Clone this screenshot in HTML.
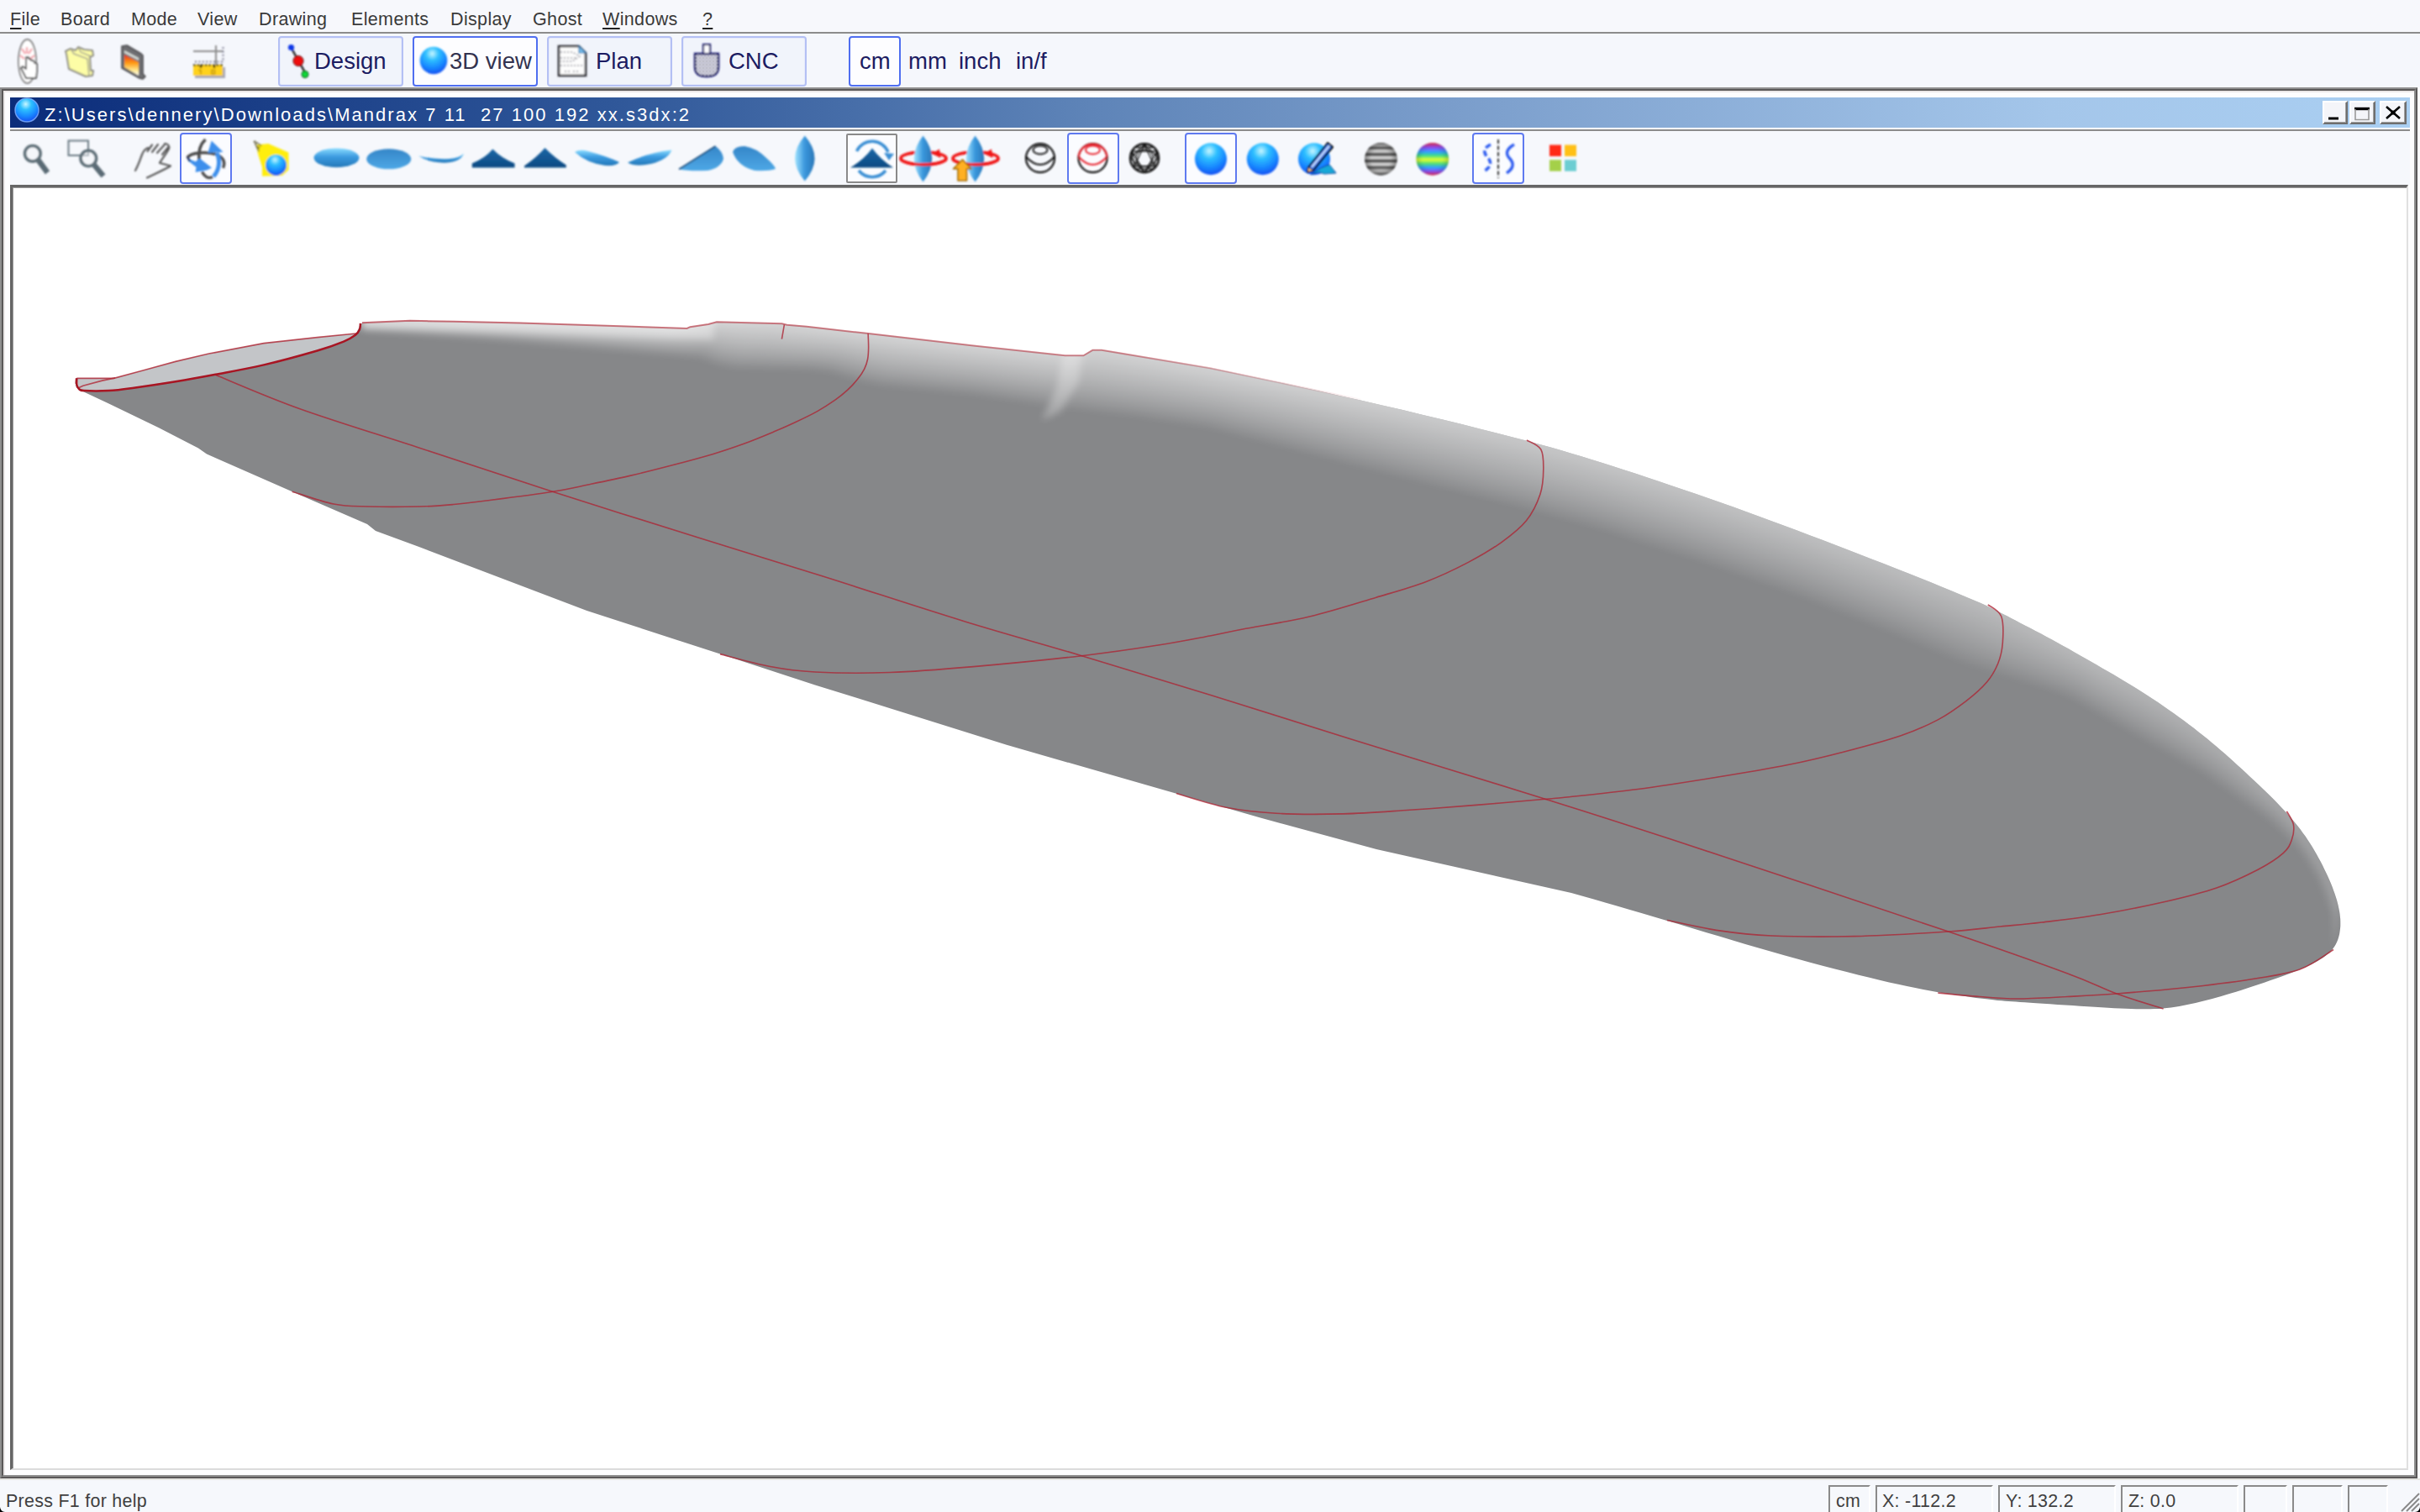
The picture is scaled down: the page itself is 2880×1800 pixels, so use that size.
<!DOCTYPE html><html><head><meta charset="utf-8"><title>Shape3d</title><style>
*{box-sizing:border-box;margin:0;padding:0}
html,body{width:2880px;height:1800px;overflow:hidden;background:#f6f8fc;font-family:"Liberation Sans",sans-serif;}
.abs{position:absolute}
#menubar{position:absolute;left:0;top:0;width:2880px;height:38px;background:#f7f8fc}
#menubar span{position:absolute;top:9.5px;font-size:21.5px;line-height:26px;color:#3a3a3a;letter-spacing:.35px;white-space:nowrap}
#menubar u{text-decoration:underline;text-decoration-thickness:2px;text-underline-offset:2.5px;text-decoration-color:#222}
#menuline{position:absolute;left:0;top:38px;width:2880px;height:2px;background:#8c8c8c}
#tb1{position:absolute;left:0;top:40px;width:2880px;height:64px;background:#f5f7fc}
.btn{position:absolute;top:43px;height:60px;border:2px solid #b4c0f4;border-radius:4px;background:#f1f4fb;box-shadow:inset 0 0 0 1px #e6eafb}
.btn.sel{border-color:#4f6ef0;background:#fdfdff;box-shadow:none;border-width:2.4px}
.btxt{position:absolute;font-size:27.5px;line-height:32px;color:#1c1c62;white-space:nowrap;top:57px}
#frame{position:absolute;left:0;top:104px;width:2880px;height:1658px;background:#fdfdfe;border-bottom:2px solid #e4e4e0}
#f1{position:absolute;left:0;top:0;width:2877px;height:1656px;border:2px solid #8f8f8f;border-right-color:#5a5858;border-bottom-color:#5a5858}
#f2{position:absolute;left:2px;top:2px;width:2873px;height:1652px;border:2px solid #5a5858;border-right-color:#8f8f8f;border-bottom-color:#8f8f8f}
#f3{position:absolute;left:4px;top:4px;width:2869px;height:1648px;border:2px solid #ebe8e8;border-right:0;border-bottom:0}
#title{position:absolute;left:12px;top:12px;width:2856px;height:36px;background:linear-gradient(90deg,#0b2c7a 0%,#2f5799 25%,#5e84b8 45%,#7a9dcb 60%,#a4c6ea 85%,#aacff2 100%)}
#ttext{position:absolute;left:41px;top:7.5px;font-size:22px;line-height:26px;color:#fff;letter-spacing:2.05px;white-space:pre}
#tline{position:absolute;left:12px;top:50px;width:2856px;height:2px;background:#8c8c8c}
.wb{position:absolute;top:16px;height:28px;background:#f4f5f9;border:2px solid #fff;border-right-color:#6e6e6e;border-bottom-color:#6e6e6e;box-shadow:inset -1px -1px 0 #a0a0a0}
#tb2{position:absolute;left:12px;top:52px;width:2856px;height:64px;background:#f6f8fc}
.tbox{position:absolute;top:158px;height:61px;border:2.4px solid #5f7af0;border-radius:4px;background:#fbfcff}
.tbox.g{border-color:#8a8a8a;border-radius:2px;top:159px;height:59px;border-width:2px}
#view{position:absolute;left:12px;top:116px;width:2854px;height:1530px;background:#fff;border:3px solid #666;border-right:2px solid #e0e0e0;border-bottom:2px solid #dcdcdc}
#view:after{content:"";position:absolute;left:0;top:0;right:0;bottom:0;border-left:1px solid #9a9a9a;border-top:1px solid #9a9a9a}
#status{position:absolute;left:0;top:1762px;width:2880px;height:38px;background:#f6f8fc}
#status span{position:absolute;top:11.8px;font-size:21.4px;line-height:26px;color:#404040;letter-spacing:.3px;white-space:nowrap}
.pane{position:absolute;top:1768px;height:34px;border-left:2px solid #8a8a8a;border-top:2px solid #8a8a8a;border-right:2px solid #fff}
svg.board{position:absolute;left:0;top:0}
svg.ic{position:absolute;overflow:visible}
</style></head><body>
<div id="menubar">
<span style="left:12px"><u>F</u>ile</span>
<span style="left:72px">Board</span>
<span style="left:156px">Mode</span>
<span style="left:235px">View</span>
<span style="left:308px">Drawing</span>
<span style="left:418px">Elements</span>
<span style="left:536px">Display</span>
<span style="left:634px">Ghost</span>
<span style="left:717px"><u>W</u>indows</span>
<span style="left:836px"><u>?</u></span>
</div><div id="menuline"></div>
<div id="tb1"></div>
<div class="btn" style="left:331px;width:149px"></div>
<div class="btn sel" style="left:491px;width:149px"></div>
<div class="btn" style="left:651px;width:149px"></div>
<div class="btn" style="left:811px;width:149px"></div>
<div class="btn sel" style="left:1010px;width:62px"></div>
<div class="btxt" style="left:374px;color:#1c1c62">Design</div>
<div class="btxt" style="left:535px;color:#33334f">3D view</div>
<div class="btxt" style="left:709px;color:#1c1c62">Plan</div>
<div class="btxt" style="left:867px;color:#1c1c62">CNC</div>
<div class="btxt" style="left:1023px;color:#1c1c62">cm</div>
<div class="btxt" style="left:1081px;color:#1c1c62">mm</div>
<div class="btxt" style="left:1141px;color:#1c1c62">inch</div>
<div class="btxt" style="left:1209px;color:#1c1c62">in/f</div>
<svg class="ic" style="left:0;top:0" width="2880" height="230" viewBox="0 0 2880 230">
<defs>
<radialGradient id="sph" cx=".45" cy=".25" r=".8"><stop offset="0" stop-color="#c8f6ff"/><stop offset=".3" stop-color="#2ec0ff"/><stop offset=".65" stop-color="#1888ff"/><stop offset="1" stop-color="#1746f0"/></radialGradient>
<linearGradient id="lz" x1="0" y1="0" x2="0" y2="1"><stop offset="0" stop-color="#8adcff"/><stop offset=".45" stop-color="#3c9be0"/><stop offset="1" stop-color="#2478b8"/></linearGradient>
<linearGradient id="lz2" x1="0" y1="0" x2="0" y2="1"><stop offset="0" stop-color="#3586c8"/><stop offset="1" stop-color="#4ea8e6"/></linearGradient>
<linearGradient id="lzh" x1="0" y1="0" x2="1" y2="0"><stop offset="0" stop-color="#9fe3ff"/><stop offset=".5" stop-color="#3996dc"/><stop offset="1" stop-color="#2c78b8"/></linearGradient>
<linearGradient id="tri" x1="0" y1="0" x2="0" y2="1"><stop offset="0" stop-color="#1d66a6"/><stop offset="1" stop-color="#0a4a82"/></linearGradient>
<linearGradient id="flame" x1="0" y1="0" x2="0" y2="1"><stop offset="0" stop-color="#e83020"/><stop offset=".4" stop-color="#ff9a10"/><stop offset=".75" stop-color="#ffe890"/><stop offset="1" stop-color="#fff"/></linearGradient>
<linearGradient id="rain" x1="0" y1="0" x2="0" y2="1"><stop offset="0" stop-color="#ff3050"/><stop offset=".15" stop-color="#9050ff"/><stop offset=".28" stop-color="#30a0ff"/><stop offset=".4" stop-color="#40e080"/><stop offset=".52" stop-color="#e8ff30"/><stop offset=".64" stop-color="#50e070"/><stop offset=".76" stop-color="#30a0ff"/><stop offset=".88" stop-color="#9050ff"/><stop offset="1" stop-color="#ff3050"/></linearGradient>
<linearGradient id="strp" x1="0" y1="0" x2="0" y2="1">
<stop offset="0" stop-color="#555"/><stop offset=".08" stop-color="#ddd"/><stop offset=".16" stop-color="#444"/><stop offset=".26" stop-color="#e8e8e8"/><stop offset=".36" stop-color="#333"/><stop offset=".46" stop-color="#eee"/><stop offset=".56" stop-color="#333"/><stop offset=".66" stop-color="#e8e8e8"/><stop offset=".76" stop-color="#444"/><stop offset=".86" stop-color="#ddd"/><stop offset="1" stop-color="#555"/></linearGradient>
<radialGradient id="shade" cx=".5" cy=".5" r=".5"><stop offset=".6" stop-color="#000" stop-opacity="0"/><stop offset="1" stop-color="#000" stop-opacity=".35"/></radialGradient>
<filter id="ib"><feGaussianBlur stdDeviation="0.8"/></filter>
</defs>
<g filter="url(#ib)">
<ellipse cx="32.5" cy="73" rx="10.5" ry="26" fill="#fff" stroke="#7a7a7a" stroke-width="1.8"/>
<path d="M26,58 l4,6 M38,58 l-4,6 M24,66 l5,4 M41,66 l-5,4 M32,56 v8" stroke="#f4a8b0" stroke-width="2.4" fill="none"/>
<path d="M31,68 l0,14 l-4,-3 l-2,2 l6,12 l12,0 l1,-8 l0,-9 l-3,-1 l-1,-3 l-3,0 l-1,-2 l-2,0 l0,-2 z" fill="#fff" stroke="#444" stroke-width="1.8" stroke-linejoin="round"/>
<path d="M78,61 L84,58 L90,60 L93,56 L100,59 L110,60 L111,66 L107,68 L108,84 L111,84 L110,90 L102,91 L82,82 L79,64Z" fill="#fdfda6" stroke="#8c8c84" stroke-width="2" stroke-linejoin="round"/>
<path d="M84,58 L88,64 L104,70 L106,90 M93,56 L96,62 L108,67" fill="none" stroke="#a8a894" stroke-width="1.6"/>
<path d="M145,55 L151,54 L168,64 L170,66 L170,88 L173,91 L170,94 L166,93 L145,81Z" fill="#6e6e72" stroke="#4a4a4e" stroke-width="1.6" stroke-linejoin="round"/>
<path d="M148,60 L165,69 L165,72 L148,63Z" fill="#d8dcd8"/>
<path d="M148,65 L165,74 L165,90 L148,80Z" fill="url(#flame)"/>
<path d="M230,61 h36 M257,54 v24" stroke="#8a8a8a" stroke-width="2" fill="none"/>
<path d="M232,73.5 h34 M265.5,56 v18" stroke="#7a7a90" stroke-width="2" stroke-dasharray="2 2.4" fill="none"/>
<rect x="232" y="80" width="36" height="13" fill="#a9a9b4"/>
<rect x="230" y="77" width="35" height="13" fill="#ffd21a"/>
<path d="M230,77.5 h35" stroke="#111" stroke-width="2.2" stroke-dasharray="2.6 2"/>
<path d="M239,77 v4 M255,77 v4" stroke="#111" stroke-width="2.2"/>
<path d="M236,83.5 h3 v5 M252,83.5 h3.5 v4.5 h-3.5z" stroke="#c89a10" stroke-width="1.6" fill="none"/>
<path d="M346,56 L364,88" stroke="#111" stroke-width="2.2"/>
<circle cx="346.5" cy="56.5" r="3.6" fill="#0e38e8"/><circle cx="355" cy="72.5" r="6" fill="#f01010" stroke="#300" stroke-width="1"/><circle cx="363" cy="88.5" r="4" fill="#10d838" stroke="#030" stroke-width="1"/>
<circle cx="516" cy="72" r="16.3" fill="url(#sph)"/>
<path d="M665,55 h24 l8,8 v27 h-32z" fill="#fdfdfd" stroke="#26262e" stroke-width="2.6"/>
<path d="M689,55 l8,8 h-8z" fill="#7ac0ee" stroke="#3a7ab0" stroke-width="1.2"/>
<path d="M667,62 h14 l9,5 l-9,6 h-14 M667,69 h20 M667,78 h28 M672,85 h6 M682,85 h6" stroke="#8a8a96" stroke-width="1.5" stroke-dasharray="2 2" fill="none"/>
<defs><pattern id="dots" width="4" height="4" patternUnits="userSpaceOnUse"><rect width="4" height="4" fill="#fff"/><rect width="2" height="2" fill="#14146a"/><rect x="2" y="2" width="2" height="2" fill="#14146a" fill-opacity=".55"/></pattern></defs>
<path d="M827,64 h28 v16 q0,11 -14,11 q-14,0 -14,-11z" fill="url(#dots)" stroke="#14146a" stroke-width="2.4"/>
<rect x="837" y="53" width="8" height="11" fill="#fff" stroke="#14146a" stroke-width="2.2"/>
</g></svg>
<div id="frame"><div id="f1"></div><div id="f2"></div><div id="f3"></div>
<div id="title"><div id="ttext">Z:\Users\dennery\Downloads\Mandrax 7 11  27 100 192 xx.s3dx:2</div></div>
<div id="tline"></div>
<div class="wb" style="left:2764px;width:30px"></div>
<div class="wb" style="left:2796px;width:31px"></div>
<div class="wb" style="left:2832px;width:32px"></div>
<div id="tb2"></div>
<div id="view"></div>
</div>
<div class="tbox" style="left:214px;width:62px"></div>
<div class="tbox g" style="left:1007px;width:61px"></div>
<div class="tbox" style="left:1270px;width:62px"></div>
<div class="tbox" style="left:1410px;width:62px"></div>
<div class="tbox" style="left:1752px;width:62px"></div>
<svg class="ic" style="left:0;top:0" width="2880" height="160" viewBox="0 0 2880 160">
<circle cx="32" cy="131" r="14" fill="url(#sph)" stroke="#7fb0ff" stroke-width="1.5" stroke-opacity=".8"/>
<path d="M2771,141 h12" stroke="#000" stroke-width="3"/>
<path d="M2802,129.5 h18" stroke="#000" stroke-width="3.4"/><path d="M2803,130 v12.5 h16 v-12.5" stroke="#9a9a9a" stroke-width="1.6" fill="none"/>
<path d="M2840,127 l16,14 M2856,127 l-16,14" stroke="#000" stroke-width="2.6"/><circle cx="2848" cy="134" r="2.6"/>
</svg>
<svg class="ic" style="left:0;top:0" width="2880" height="230" viewBox="0 0 2880 230">
<g filter="url(#ib)">
<path d="M45.3,190.3 L56.5,205.5" stroke="#5a6b74" stroke-width="6.5" stroke-linecap="butt"/><circle cx="38.8" cy="182.8" r="9.3" fill="#f4f6fa" fill-opacity=".5" stroke="#5f6f78" stroke-width="3.6"/>
<rect x="81.5" y="167.5" width="23.5" height="17.5" fill="none" stroke="#6a7a84" stroke-width="2"/>
<path d="M111.8,196.0 L123.0,209.5" stroke="#5a6b74" stroke-width="6.5" stroke-linecap="butt"/><circle cx="105.3" cy="188.5" r="9.3" fill="#f4f6fa" fill-opacity=".5" stroke="#5f6f78" stroke-width="3.6"/>
<path d="M161,203 C165,196 167,189 169,184 C171,179 173,177 176,176 M175.500,180 L181,172.500 M181,181 L188,172 M187,182 L196,172 M193,184 L200,175.500 M196,171 C200,171 202,174 201,177 C198,183 193,189 190,194 L203,197.500 C196,202 184,207 175,211.500" fill="none" stroke="#585858" stroke-width="2.2" stroke-linecap="round" stroke-linejoin="round"/>
<path d="M244.500,166 C238,172 236,181 237,190" fill="none" stroke="#4c4c4c" stroke-width="3.6"/>
<path d="M223,188 C226,181 248,180 259,184.500 C266,188 268.500,193 265.500,200" fill="none" stroke="#4c4c4c" stroke-width="3.4"/>
<path d="M240.500,204.500 C243,210 248,213.500 253,210.500" fill="none" stroke="#4c4c4c" stroke-width="3.4"/>
<path d="M258,182 C262.500,191 261,203 254,210" fill="none" stroke="#3d8fec" stroke-width="5"/>
<path d="M251.700,167.500 L247.500,182 L265.500,181Z" fill="#3d8fec"/>
<path d="M223.500,188.500 L232.600,192.400 L237.600,188.500 L252,199.800 L246,202.500 L232.600,205 L233.500,199 L224,191.500Z" fill="#3d8fec"/>
<path d="M223,187 L226,192" stroke="#1a2a5a" stroke-width="2.4"/>
<path d="M305.400,172.500 L319.400,171 L343.400,181.600 L343.400,202.300 L336,209 L312,209.700 L312,199 L307,183.300Z" fill="#ffee10"/>
<path d="M302.500,168 L308,180 M302.500,168 L311,173.500 M305,174 L309,176" stroke="#55502a" stroke-width="2" stroke-dasharray="2 1" fill="none"/>
<circle cx="328.500" cy="196.500" r="12.500" fill="url(#sph)"/>
<ellipse cx="400.5" cy="187.8" rx="27" ry="11.4" fill="url(#lz)"/>
<ellipse cx="462.7" cy="189.3" rx="26.5" ry="12" fill="url(#lz2)"/>
<path d="M498,185.5 Q515,190 535,189 Q547,188 552,182.5 Q549,192 533,193.5 Q512,195 498,185.5Z" fill="url(#lz)"/>
<path d="M586.4,177.5 Q597,188.5 612.5,194.5 L612.5,199.5 L561.8,199.5 L561.8,194.5 Q577,188.5 586.4,177.5Z" fill="url(#tri)"/>
<path d="M648.5,176 Q659,187 673.8,196.5 L673.8,199.5 L624,199.5 L624,197.5 Q639,187 648.5,176Z" fill="url(#tri)"/>
<path d="M684,181 Q690,177 700,180 Q722,186 737,193 Q734,198 720,197 Q698,194 684,181Z" fill="url(#lz)"/>
<path d="M747,193.5 Q770,182 799.5,178.5 Q795,190 775,195 Q756,199 747,193.5Z" fill="url(#lz)"/>
<path d="M808,201.5 L851.5,174 Q860,180 861,189 Q858,200 842,203 Q820,204 808,201.5Z" fill="url(#lz2)"/>
<path d="M808,201.5 L851.5,174" stroke="#1a4a7a" stroke-width="1.6"/>
<path d="M872,181 Q874,174 886,174 Q900,176 912,188 Q922,197 923,201 Q915,204 898,203 Q878,198 872,181Z" fill="url(#lz2)"/>
<path d="M957.8,161.5 Q981.2,188.5 957.8,215.5 Q934.4,188.5 957.8,161.5 Z" fill="url(#lzh)"/>
<path d="M1019.5,180 A20.5,20.5 0 0 1 1057,181" fill="none" stroke="#3b8fd4" stroke-width="3.6"/>
<path d="M1052,182 l12,1 l-6,8z" fill="#3b8fd4"/>
<path d="M1054,203 A20.5,20.5 0 0 1 1022,203" fill="none" stroke="#3b8fd4" stroke-width="3.6"/>
<path d="M1038,176.5 Q1048,190 1063,199.5 L1012,199.5 Q1028,190 1038,176.5Z" fill="url(#tri)"/>
<ellipse cx="1099.0" cy="188.5" rx="27" ry="7.4" fill="none" stroke="#f01818" stroke-width="3.6"/>
<path d="M1098.5,161.5 Q1119.9,189.0 1098.5,216.5 Q1077.1,189.0 1098.5,161.5 Z" fill="url(#lzh)"/>
<path d="M1072.0,188.500 A27,7.400 0 0 0 1126.0,188.500" fill="none" stroke="#f01818" stroke-width="3.600"/>
<path d="M1118.0,177.500 l-9,5.500 l10.500,5z" fill="#f01818"/>
<ellipse cx="1161.0" cy="188.5" rx="27" ry="7.4" fill="none" stroke="#f01818" stroke-width="3.6"/>
<path d="M1160.5,161.5 Q1181.9,189.0 1160.5,216.5 Q1139.1,189.0 1160.5,161.5 Z" fill="url(#lzh)"/>
<path d="M1134.0,188.500 A27,7.400 0 0 0 1188.0,188.500" fill="none" stroke="#f01818" stroke-width="3.600"/>
<path d="M1180.0,177.500 l-9,5.500 l10.500,5z" fill="#f01818"/>
<path d="M1145.500,190 L1156,201 L1150.500,201 L1150.500,215 L1140,215 L1140,201 L1134.500,201Z" fill="#ffb020" stroke="#a06800" stroke-width="1.600" stroke-linejoin="round"/>
<circle cx="1238.0" cy="188.200" r="17" fill="none" stroke="#111" stroke-width="2.200"/>
<ellipse cx="1238.0" cy="178.500" rx="8.500" ry="5" fill="none" stroke="#111" stroke-width="1.900"/>
<path d="M1221.5,187 Q1238.0,205 1254.5,187" fill="none" stroke="#111" stroke-width="1.900"/>
<circle cx="1300.5" cy="188.200" r="17" fill="none" stroke="#111" stroke-width="2.200"/>
<path d="M1283.7,186 A17,17 0 0 1 1317.3,186" fill="none" stroke="#e8202c" stroke-width="2.200"/>
<ellipse cx="1300.5" cy="178.500" rx="8.500" ry="5" fill="none" stroke="#e8202c" stroke-width="1.900"/>
<path d="M1284.0,187 Q1300.5,205 1317.0,187" fill="none" stroke="#e8202c" stroke-width="1.900"/>
<circle cx="1362" cy="188.200" r="17" fill="none" stroke="#111" stroke-width="2.400"/>
<path d="M1347,180 L1377,180 L1362,205Z M1350,198 L1374,198 L1362,172Z M1345.500,188 L1362,172 L1378.500,188 L1362,205Z M1352,175.500 L1372,175.500 M1352,201 L1372,201 M1347,180 L1350,198 M1377,180 L1374,198" fill="none" stroke="#111" stroke-width="1.300"/>
<circle cx="1362" cy="188.200" r="10" fill="none" stroke="#111" stroke-width="1.200"/>
<circle cx="1441" cy="189.3" r="19" fill="url(#sph)"/>
<circle cx="1502.8" cy="189.3" r="19" fill="url(#sph)"/>
<circle cx="1564" cy="189.3" r="19" fill="url(#sph)"/>
<path d="M1560,208 L1572,200 L1582,196 L1590,206 L1576,207 L1570,205Z" fill="#18a8d8" stroke="#0a3a9a" stroke-width="1"/>
<path d="M1557,199 L1580,170 L1586,175 L1563,203 L1556,205Z" fill="#2a6ae0" stroke="#000" stroke-width="2" stroke-linejoin="round"/>
<path d="M1561,199 L1582,173.500" stroke="#cfe4ff" stroke-width="2"/>
<path d="M1557,199 L1563,203 L1556,205Z" fill="#f8c89a" stroke="#000" stroke-width="1"/>
<circle cx="1643.4" cy="189.3" r="19.4" fill="url(#strp)"/><circle cx="1643.4" cy="189.3" r="19.4" fill="url(#shade)"/>
<circle cx="1704.8" cy="189.3" r="19.4" fill="url(#rain)"/><circle cx="1704.8" cy="189.3" r="19.4" fill="url(#shade)" fill-opacity=".5"/>
<path d="M1774,172 Q1762,178 1770,187 Q1779,196 1766,204" fill="none" stroke="#2d5cf0" stroke-width="3.6" stroke-dasharray="7 3.5"/>
<path d="M1783,166 v46" stroke="#222" stroke-width="1.8" stroke-dasharray="5 2.5"/>
<path d="M1802,172 Q1788,180 1797,189 Q1805,198 1793,206" fill="none" stroke="#2d5cf0" stroke-width="3.4"/>
<rect x="1844" y="172.5" width="14" height="13.5" fill="#ff2a14"/><rect x="1862" y="172.5" width="14" height="13.5" fill="#ffc018"/><rect x="1844" y="190.3" width="14" height="13.5" fill="#a4d048"/><rect x="1862" y="190.3" width="14" height="13.5" fill="#6ccdd2"/>
</g></svg>
<svg class="board" width="2880" height="1800" viewBox="0 0 2880 1800">
<defs><clipPath id="bc"><path d="M95.8,464.6 L91.0,461.5 L89.6,456.0 L90.0,451.0 L92.0,450.3 L135.5,450.3 L169.2,441.3 L208.9,430.4 L248.6,421.0 L314.0,408.6 L377.5,401.7 L424.0,397.0 L429.0,392.0 L429.5,386.0 L431.0,384.2 L488.0,381.8 L540.0,382.8 L619.0,384.6 L738.0,388.2 L817.5,391.0 L821.4,389.2 L843.0,386.0 L853.0,383.3 L930.5,385.2 L936.5,386.8 L960.0,388.8 L1033.4,397.1 L1158.4,411.4 L1267.5,423.3 L1289.4,423.3 L1300.3,416.8 L1311.0,416.8 L1440.0,438.3 L1460.8,442.6 L1481.9,446.9 L1503.4,451.4 L1525.5,456.1 L1548.4,461.0 L1571.9,466.1 L1595.9,471.4 L1620.3,476.8 L1644.9,482.4 L1669.4,488.1 L1693.6,493.9 L1717.1,499.5 L1739.7,505.1 L1761.0,510.4 L1781.0,515.4 L1799.4,520.2 L1816.1,524.6 L1831.5,528.7 L1845.5,532.6 L1858.5,536.3 L1870.8,540.0 L1882.8,543.6 L1894.7,547.3 L1906.9,551.1 L1919.4,555.1 L1932.4,559.3 L1945.9,563.6 L1959.9,568.2 L1974.2,573.0 L1988.8,577.9 L2003.6,582.9 L2018.5,588.0 L2033.5,593.2 L2048.5,598.5 L2063.5,603.8 L2078.4,609.2 L2093.4,614.7 L2108.3,620.2 L2123.3,625.7 L2138.2,631.3 L2153.1,636.9 L2168.0,642.6 L2182.9,648.2 L2197.8,653.9 L2212.6,659.7 L2227.3,665.4 L2241.9,671.1 L2256.3,676.7 L2270.4,682.3 L2284.2,687.8 L2297.4,693.1 L2309.9,698.2 L2321.6,703.0 L2332.3,707.4 L2341.8,711.4 L2350.2,715.0 L2357.4,718.1 L2363.4,720.8 L2368.6,723.2 L2373.1,725.4 L2377.1,727.4 L2380.9,729.4 L2384.8,731.4 L2389.0,733.6 L2393.5,736.0 L2398.5,738.6 L2403.9,741.4 L2409.7,744.4 L2415.8,747.5 L2422.2,750.9 L2428.7,754.3 L2435.4,757.9 L2442.1,761.5 L2448.8,765.2 L2455.5,768.9 L2462.1,772.6 L2468.8,776.4 L2475.4,780.2 L2482.1,784.0 L2488.7,787.8 L2495.3,791.6 L2501.9,795.4 L2508.6,799.2 L2515.2,803.1 L2521.8,807.0 L2528.4,811.0 L2535.1,815.0 L2541.7,819.1 L2548.4,823.3 L2555.0,827.5 L2561.5,831.8 L2568.1,836.1 L2574.5,840.5 L2580.9,844.9 L2587.1,849.3 L2593.2,853.7 L2599.2,858.1 L2605.0,862.5 L2610.8,866.8 L2616.3,871.2 L2621.8,875.5 L2627.2,879.8 L2632.4,884.2 L2637.6,888.5 L2642.7,892.9 L2647.8,897.3 L2652.8,901.8 L2657.8,906.3 L2662.9,910.9 L2668.0,915.6 L2673.1,920.3 L2678.3,925.2 L2683.5,930.1 L2688.8,935.1 L2694.0,940.1 L2699.2,945.1 L2704.3,950.1 L2709.2,955.0 L2713.9,959.9 L2718.4,964.7 L2722.7,969.3 L2726.7,973.9 L2730.5,978.4 L2734.0,982.7 L2737.4,987.1 L2740.5,991.4 L2743.6,995.6 L2746.5,999.9 L2749.3,1004.2 L2752.0,1008.6 L2754.6,1012.9 L2757.1,1017.3 L2759.5,1021.7 L2761.9,1026.1 L2764.2,1030.5 L2766.3,1034.9 L2768.4,1039.2 L2770.4,1043.5 L2772.3,1047.8 L2774.1,1052.0 L2775.7,1056.1 L2777.2,1060.2 L2778.6,1064.1 L2779.9,1067.9 L2781.0,1071.6 L2782.0,1075.2 L2782.8,1078.6 L2783.5,1081.9 L2784.1,1085.1 L2784.6,1088.2 L2784.9,1091.2 L2785.2,1094.1 L2785.3,1096.9 L2785.3,1099.6 L2785.3,1102.2 L2785.1,1104.7 L2784.8,1107.2 L2784.5,1109.6 L2784.1,1111.9 L2783.6,1114.1 L2783.0,1116.3 L2782.3,1118.4 L2781.5,1120.5 L2780.6,1122.6 L2779.6,1124.6 L2778.4,1126.6 L2777.0,1128.5 L2775.5,1130.5 L2773.7,1132.4 L2771.7,1134.4 L2769.5,1136.3 L2767.1,1138.2 L2764.4,1140.2 L2761.4,1142.1 L2758.2,1144.1 L2754.6,1146.0 L2750.8,1148.0 L2746.6,1150.0 L2742.1,1152.0 L2737.2,1154.0 L2732.1,1156.1 L2726.6,1158.3 L2720.7,1160.5 L2714.6,1162.7 L2708.2,1165.0 L2701.5,1167.3 L2694.7,1169.7 L2687.8,1172.0 L2680.9,1174.3 L2674.1,1176.5 L2667.5,1178.7 L2661.1,1180.7 L2655.0,1182.6 L2649.1,1184.3 L2643.5,1186.0 L2638.1,1187.5 L2632.8,1189.0 L2627.8,1190.3 L2622.8,1191.6 L2617.8,1192.8 L2612.9,1194.0 L2608.0,1195.0 L2603.2,1196.1 L2598.3,1197.0 L2593.4,1197.9 L2588.6,1198.7 L2583.7,1199.4 L2578.8,1200.0 L2574.0,1200.5 L2569.0,1200.9 L2564.0,1201.1 L2558.9,1201.3 L2553.6,1201.3 L2548.1,1201.3 L2542.3,1201.2 L2536.3,1201.0 L2529.9,1200.8 L2523.2,1200.5 L2516.2,1200.2 L2508.8,1199.8 L2501.0,1199.3 L2492.9,1198.8 L2484.5,1198.3 L2475.7,1197.7 L2466.7,1197.1 L2457.6,1196.5 L2448.6,1195.9 L2439.7,1195.3 L2431.3,1194.7 L2423.4,1194.2 L2416.2,1193.7 L2409.7,1193.3 L2404.1,1192.9 L2399.1,1192.6 L2394.6,1192.3 L2390.4,1192.0 L2386.3,1191.7 L2382.0,1191.3 L2377.2,1190.9 L2371.9,1190.3 L2365.8,1189.6 L2359.0,1188.8 L2351.5,1187.9 L2343.5,1186.8 L2335.0,1185.6 L2326.1,1184.3 L2317.0,1182.9 L2307.8,1181.4 L2298.4,1179.8 L2288.9,1178.0 L2279.3,1176.1 L2269.4,1174.1 L2259.0,1171.8 L2248.2,1169.4 L2236.8,1166.7 L2224.8,1163.8 L2212.0,1160.7 L2198.6,1157.3 L2184.6,1153.8 L2170.0,1150.0 L2155.0,1146.0 L2139.7,1141.8 L2124.2,1137.5 L2108.5,1133.1 L2092.8,1128.6 L2077.1,1124.0 L2061.4,1119.3 L2045.8,1114.6 L2030.2,1109.9 L2014.6,1105.2 L1999.1,1100.6 L1983.7,1095.9 L1968.5,1091.4 L1953.4,1087.0 L1938.7,1082.7 L1924.3,1078.5 L1910.3,1074.5 L1896.7,1070.6 L1883.3,1066.8 L1870.0,1063.0 L1638.0,1011.0 L1499.0,973.3 L1420.0,950.5 L1198.0,886.8 L970.0,815.4 L857.0,778.6 L698.4,727.0 L500.0,651.6 L447.0,632.0 L437.0,624.0 L347.7,585.2 L246.0,540.5 L236.0,533.5 L189.0,509.3 L129.5,480.5 L97.0,465.2Z"/></clipPath>
<filter id="bl" x="-5%" y="-5%" width="110%" height="110%"><feGaussianBlur stdDeviation="4"/></filter>
<filter id="bl1" x="-5%" y="-5%" width="110%" height="110%"><feGaussianBlur stdDeviation="0.7"/></filter>
<linearGradient id="hm" gradientUnits="userSpaceOnUse" x1="431" y1="0" x2="2790" y2="0"><stop offset="0" stop-color="#fff"/><stop offset=".43" stop-color="#ededed"/><stop offset=".665" stop-color="#bcbcbc"/><stop offset=".877" stop-color="#999"/><stop offset="1" stop-color="#555"/></linearGradient>
<mask id="hmask" maskUnits="userSpaceOnUse" x="0" y="0" width="2880" height="1800"><rect width="2880" height="1800" fill="url(#hm)"/></mask>
</defs>
<g filter="url(#bl1)">
<path d="M95.8,464.6 L91.0,461.5 L89.6,456.0 L90.0,451.0 L92.0,450.3 L135.5,450.3 L169.2,441.3 L208.9,430.4 L248.6,421.0 L314.0,408.6 L377.5,401.7 L424.0,397.0 L429.0,392.0 L429.5,386.0 L431.0,384.2 L488.0,381.8 L540.0,382.8 L619.0,384.6 L738.0,388.2 L817.5,391.0 L821.4,389.2 L843.0,386.0 L853.0,383.3 L930.5,385.2 L936.5,386.8 L960.0,388.8 L1033.4,397.1 L1158.4,411.4 L1267.5,423.3 L1289.4,423.3 L1300.3,416.8 L1311.0,416.8 L1440.0,438.3 L1460.8,442.6 L1481.9,446.9 L1503.4,451.4 L1525.5,456.1 L1548.4,461.0 L1571.9,466.1 L1595.9,471.4 L1620.3,476.8 L1644.9,482.4 L1669.4,488.1 L1693.6,493.9 L1717.1,499.5 L1739.7,505.1 L1761.0,510.4 L1781.0,515.4 L1799.4,520.2 L1816.1,524.6 L1831.5,528.7 L1845.5,532.6 L1858.5,536.3 L1870.8,540.0 L1882.8,543.6 L1894.7,547.3 L1906.9,551.1 L1919.4,555.1 L1932.4,559.3 L1945.9,563.6 L1959.9,568.2 L1974.2,573.0 L1988.8,577.9 L2003.6,582.9 L2018.5,588.0 L2033.5,593.2 L2048.5,598.5 L2063.5,603.8 L2078.4,609.2 L2093.4,614.7 L2108.3,620.2 L2123.3,625.7 L2138.2,631.3 L2153.1,636.9 L2168.0,642.6 L2182.9,648.2 L2197.8,653.9 L2212.6,659.7 L2227.3,665.4 L2241.9,671.1 L2256.3,676.7 L2270.4,682.3 L2284.2,687.8 L2297.4,693.1 L2309.9,698.2 L2321.6,703.0 L2332.3,707.4 L2341.8,711.4 L2350.2,715.0 L2357.4,718.1 L2363.4,720.8 L2368.6,723.2 L2373.1,725.4 L2377.1,727.4 L2380.9,729.4 L2384.8,731.4 L2389.0,733.6 L2393.5,736.0 L2398.5,738.6 L2403.9,741.4 L2409.7,744.4 L2415.8,747.5 L2422.2,750.9 L2428.7,754.3 L2435.4,757.9 L2442.1,761.5 L2448.8,765.2 L2455.5,768.9 L2462.1,772.6 L2468.8,776.4 L2475.4,780.2 L2482.1,784.0 L2488.7,787.8 L2495.3,791.6 L2501.9,795.4 L2508.6,799.2 L2515.2,803.1 L2521.8,807.0 L2528.4,811.0 L2535.1,815.0 L2541.7,819.1 L2548.4,823.3 L2555.0,827.5 L2561.5,831.8 L2568.1,836.1 L2574.5,840.5 L2580.9,844.9 L2587.1,849.3 L2593.2,853.7 L2599.2,858.1 L2605.0,862.5 L2610.8,866.8 L2616.3,871.2 L2621.8,875.5 L2627.2,879.8 L2632.4,884.2 L2637.6,888.5 L2642.7,892.9 L2647.8,897.3 L2652.8,901.8 L2657.8,906.3 L2662.9,910.9 L2668.0,915.6 L2673.1,920.3 L2678.3,925.2 L2683.5,930.1 L2688.8,935.1 L2694.0,940.1 L2699.2,945.1 L2704.3,950.1 L2709.2,955.0 L2713.9,959.9 L2718.4,964.7 L2722.7,969.3 L2726.7,973.9 L2730.5,978.4 L2734.0,982.7 L2737.4,987.1 L2740.5,991.4 L2743.6,995.6 L2746.5,999.9 L2749.3,1004.2 L2752.0,1008.6 L2754.6,1012.9 L2757.1,1017.3 L2759.5,1021.7 L2761.9,1026.1 L2764.2,1030.5 L2766.3,1034.9 L2768.4,1039.2 L2770.4,1043.5 L2772.3,1047.8 L2774.1,1052.0 L2775.7,1056.1 L2777.2,1060.2 L2778.6,1064.1 L2779.9,1067.9 L2781.0,1071.6 L2782.0,1075.2 L2782.8,1078.6 L2783.5,1081.9 L2784.1,1085.1 L2784.6,1088.2 L2784.9,1091.2 L2785.2,1094.1 L2785.3,1096.9 L2785.3,1099.6 L2785.3,1102.2 L2785.1,1104.7 L2784.8,1107.2 L2784.5,1109.6 L2784.1,1111.9 L2783.6,1114.1 L2783.0,1116.3 L2782.3,1118.4 L2781.5,1120.5 L2780.6,1122.6 L2779.6,1124.6 L2778.4,1126.6 L2777.0,1128.5 L2775.5,1130.5 L2773.7,1132.4 L2771.7,1134.4 L2769.5,1136.3 L2767.1,1138.2 L2764.4,1140.2 L2761.4,1142.1 L2758.2,1144.1 L2754.6,1146.0 L2750.8,1148.0 L2746.6,1150.0 L2742.1,1152.0 L2737.2,1154.0 L2732.1,1156.1 L2726.6,1158.3 L2720.7,1160.5 L2714.6,1162.7 L2708.2,1165.0 L2701.5,1167.3 L2694.7,1169.7 L2687.8,1172.0 L2680.9,1174.3 L2674.1,1176.5 L2667.5,1178.7 L2661.1,1180.7 L2655.0,1182.6 L2649.1,1184.3 L2643.5,1186.0 L2638.1,1187.5 L2632.8,1189.0 L2627.8,1190.3 L2622.8,1191.6 L2617.8,1192.8 L2612.9,1194.0 L2608.0,1195.0 L2603.2,1196.1 L2598.3,1197.0 L2593.4,1197.9 L2588.6,1198.7 L2583.7,1199.4 L2578.8,1200.0 L2574.0,1200.5 L2569.0,1200.9 L2564.0,1201.1 L2558.9,1201.3 L2553.6,1201.3 L2548.1,1201.3 L2542.3,1201.2 L2536.3,1201.0 L2529.9,1200.8 L2523.2,1200.5 L2516.2,1200.2 L2508.8,1199.8 L2501.0,1199.3 L2492.9,1198.8 L2484.5,1198.3 L2475.7,1197.7 L2466.7,1197.1 L2457.6,1196.5 L2448.6,1195.9 L2439.7,1195.3 L2431.3,1194.7 L2423.4,1194.2 L2416.2,1193.7 L2409.7,1193.3 L2404.1,1192.9 L2399.1,1192.6 L2394.6,1192.3 L2390.4,1192.0 L2386.3,1191.7 L2382.0,1191.3 L2377.2,1190.9 L2371.9,1190.3 L2365.8,1189.6 L2359.0,1188.8 L2351.5,1187.9 L2343.5,1186.8 L2335.0,1185.6 L2326.1,1184.3 L2317.0,1182.9 L2307.8,1181.4 L2298.4,1179.8 L2288.9,1178.0 L2279.3,1176.1 L2269.4,1174.1 L2259.0,1171.8 L2248.2,1169.4 L2236.8,1166.7 L2224.8,1163.8 L2212.0,1160.7 L2198.6,1157.3 L2184.6,1153.8 L2170.0,1150.0 L2155.0,1146.0 L2139.7,1141.8 L2124.2,1137.5 L2108.5,1133.1 L2092.8,1128.6 L2077.1,1124.0 L2061.4,1119.3 L2045.8,1114.6 L2030.2,1109.9 L2014.6,1105.2 L1999.1,1100.6 L1983.7,1095.9 L1968.5,1091.4 L1953.4,1087.0 L1938.7,1082.7 L1924.3,1078.5 L1910.3,1074.5 L1896.7,1070.6 L1883.3,1066.8 L1870.0,1063.0 L1638.0,1011.0 L1499.0,973.3 L1420.0,950.5 L1198.0,886.8 L970.0,815.4 L857.0,778.6 L698.4,727.0 L500.0,651.6 L447.0,632.0 L437.0,624.0 L347.7,585.2 L246.0,540.5 L236.0,533.5 L189.0,509.3 L129.5,480.5 L97.0,465.2Z" fill="#868789"/>
<g clip-path="url(#bc)"><g mask="url(#hmask)"><g filter="url(#bl)">
<path d="M431.0,381.8 L455.5,380.1 L480.0,378.4 L503.8,377.9 L527.2,378.0 L550.6,378.3 L573.9,378.5 L597.2,378.8 L620.6,379.0 L643.8,379.4 L667.1,379.8 L690.4,380.2 L713.6,380.6 L736.9,381.0 L760.0,381.5 L783.2,382.1 L806.4,382.6 L831.8,379.4 L859.3,372.7 L883.5,371.6 L907.2,371.2 L930.3,371.8 L952.0,374.8 L974.0,377.3 L995.7,380.3 L1017.7,382.8 L1040.2,384.4 L1062.7,386.1 L1084.9,388.2 L1106.9,390.8 L1128.8,393.4 L1150.7,396.0 L1172.7,398.5 L1194.7,400.9 L1216.9,403.2 L1239.0,405.4 L1261.2,407.7 L1284.0,408.8 L1312.8,400.0 L1334.9,402.3 L1356.1,406.1 L1377.3,409.9 L1398.5,413.7 L1419.8,417.4 L1441.2,421.0 L1462.1,425.2 L1482.9,429.7 L1503.9,433.8 L1524.9,438.0 L1545.9,442.2 L1566.8,446.5 L1587.7,450.8 L1608.5,455.3 L1629.3,459.8 L1650.0,464.4 L1670.7,469.0 L1691.4,473.8 L1712.0,478.6 L1732.5,483.5 L1753.0,488.5 L1773.4,493.6 L1793.8,498.8 L1814.1,504.1 L1834.3,509.6 L1854.4,515.2 L1874.4,521.1 L1894.3,527.2 L1914.0,533.5 L1933.6,539.9 L1953.2,546.4 L1972.8,552.9 L1992.3,559.5 L2011.8,566.1 L2031.2,572.9 L2050.6,579.9 L2069.9,586.8 L2089.2,593.9 L2108.4,601.0 L2127.6,608.2 L2146.7,615.4 L2165.8,622.8 L2184.9,630.1 L2204.0,637.4 L2223.1,644.7 L2242.2,652.1 L2261.2,659.5 L2280.2,667.0 L2299.2,674.6 L2318.1,682.1 L2337.0,689.8 L2355.8,697.7 L2374.3,706.0 L2392.2,715.4 L2409.6,725.5 L2427.1,735.5 L2444.4,745.7 L2461.6,756.3 L2478.6,767.1 L2495.7,777.7 L2513.2,787.8 L2530.5,798.0 L2547.7,808.6 L2564.5,819.6 L2581.1,831.1 L2597.4,843.2 L2613.3,855.8 L2628.9,868.9 L2644.2,882.7 L2659.3,896.6 L2674.1,911.0 L2688.8,925.7 L2703.3,940.7 L2717.6,956.0 L2731.5,972.0 L2744.3,989.8 L2756.4,1008.8 L2767.4,1029.7 L2777.5,1052.0 L2785.4,1078.0 L2777.0,1131.1 L2777.0,1130.4 L2782.9,1081.4 L2774.8,1055.7 L2764.8,1033.3 L2753.6,1012.8 L2741.4,994.0 L2728.1,977.1 L2714.0,961.5 L2699.3,946.9 L2684.3,932.7 L2669.2,918.8 L2654.0,905.1 L2638.5,891.7 L2622.8,878.8 L2606.8,866.4 L2590.5,854.4 L2573.9,842.9 L2557.1,831.7 L2540.1,820.9 L2522.9,810.5 L2505.6,800.3 L2488.1,790.3 L2470.6,780.4 L2452.9,770.7 L2435.2,761.2 L2417.3,751.9 L2399.3,742.7 L2381.3,733.6 L2363.1,724.7 L2344.6,716.5 L2325.8,708.6 L2307.0,700.9 L2288.1,693.3 L2269.2,685.7 L2250.2,678.2 L2231.2,670.7 L2212.2,663.3 L2193.1,655.9 L2174.0,648.6 L2154.9,641.4 L2135.7,634.2 L2116.6,627.1 L2097.3,620.0 L2078.1,612.9 L2058.8,606.0 L2039.4,599.1 L2020.0,592.4 L2000.5,585.7 L1981.0,579.1 L1961.4,572.6 L1941.8,566.2 L1922.1,559.9 L1902.4,553.7 L1882.6,547.5 L1862.7,541.6 L1842.7,535.8 L1822.5,530.3 L1802.2,524.9 L1781.9,519.7 L1761.6,514.5 L1741.1,509.4 L1720.7,504.4 L1700.2,499.4 L1679.7,494.5 L1659.1,489.6 L1638.5,484.8 L1617.9,480.1 L1597.2,475.4 L1576.5,470.8 L1555.8,466.3 L1535.0,461.8 L1514.2,457.3 L1493.4,452.9 L1472.5,448.5 L1451.6,444.2 L1430.5,440.2 L1409.2,436.7 L1387.8,433.1 L1366.5,429.6 L1345.1,426.1 L1323.7,422.6 L1301.7,420.2 L1274.6,426.2 L1252.1,424.6 L1230.1,422.2 L1208.1,419.7 L1186.1,417.3 L1164.0,414.9 L1142.0,412.4 L1120.1,409.9 L1098.1,407.4 L1076.1,405.0 L1054.2,402.3 L1032.3,399.7 L1010.5,397.0 L988.5,394.5 L966.4,392.1 L944.2,390.1 L922.2,387.7 L899.0,387.1 L876.0,386.4 L853.1,385.5 L826.8,390.1 L802.2,392.1 L779.2,391.2 L756.2,390.3 L733.3,389.5 L710.3,388.7 L687.2,388.0 L664.2,387.2 L641.2,386.5 L618.2,385.7 L595.1,385.1 L571.9,384.5 L548.8,384.0 L525.7,383.4 L502.5,382.9 L479.0,382.9 L455.0,383.8 L431.0,384.7Z" fill="#fff" fill-opacity="0.105"/>
<path d="M431.0,381.8 L455.5,380.1 L480.0,378.4 L503.8,377.9 L527.2,378.0 L550.6,378.3 L573.9,378.5 L597.2,378.8 L620.6,379.0 L643.8,379.4 L667.1,379.8 L690.4,380.2 L713.6,380.6 L736.9,381.0 L760.0,381.5 L783.2,382.1 L806.4,382.6 L831.8,379.4 L859.3,372.7 L883.5,371.6 L907.2,371.2 L930.3,371.8 L952.0,374.8 L974.0,377.3 L995.7,380.3 L1017.7,382.8 L1040.2,384.4 L1062.7,386.1 L1084.9,388.2 L1106.9,390.8 L1128.8,393.4 L1150.7,396.0 L1172.7,398.5 L1194.7,400.9 L1216.9,403.2 L1239.0,405.4 L1261.2,407.7 L1284.0,408.8 L1312.8,400.0 L1334.9,402.3 L1356.1,406.1 L1377.3,409.9 L1398.5,413.7 L1419.8,417.4 L1441.2,421.0 L1462.1,425.2 L1482.9,429.7 L1503.9,433.8 L1524.9,438.0 L1545.9,442.2 L1566.8,446.5 L1587.7,450.8 L1608.5,455.3 L1629.3,459.8 L1650.0,464.4 L1670.7,469.0 L1691.4,473.8 L1712.0,478.6 L1732.5,483.5 L1753.0,488.5 L1773.4,493.6 L1793.8,498.8 L1814.1,504.1 L1834.3,509.6 L1854.4,515.2 L1874.4,521.1 L1894.3,527.2 L1914.0,533.5 L1933.6,539.9 L1953.2,546.4 L1972.8,552.9 L1992.3,559.5 L2011.8,566.1 L2031.2,572.9 L2050.6,579.9 L2069.9,586.8 L2089.2,593.9 L2108.4,601.0 L2127.6,608.2 L2146.7,615.4 L2165.8,622.8 L2184.9,630.1 L2204.0,637.4 L2223.1,644.7 L2242.2,652.1 L2261.2,659.5 L2280.2,667.0 L2299.2,674.6 L2318.1,682.1 L2337.0,689.8 L2355.8,697.7 L2374.3,706.0 L2392.2,715.4 L2409.6,725.5 L2427.1,735.5 L2444.4,745.7 L2461.6,756.3 L2478.6,767.1 L2495.7,777.7 L2513.2,787.8 L2530.5,798.0 L2547.7,808.6 L2564.5,819.6 L2581.1,831.1 L2597.4,843.2 L2613.3,855.8 L2628.9,868.9 L2644.2,882.7 L2659.3,896.6 L2674.1,911.0 L2688.8,925.7 L2703.3,940.7 L2717.6,956.0 L2731.5,972.0 L2744.3,989.8 L2756.4,1008.8 L2767.4,1029.7 L2777.5,1052.0 L2785.4,1078.0 L2777.0,1131.1 L2777.0,1130.2 L2782.3,1082.2 L2774.2,1056.6 L2764.2,1034.2 L2752.9,1013.8 L2740.7,995.1 L2727.3,978.3 L2713.1,962.9 L2698.3,948.4 L2683.2,934.4 L2668.0,920.7 L2652.7,907.1 L2637.2,893.8 L2621.3,881.2 L2605.2,869.0 L2588.8,857.2 L2572.1,845.8 L2555.3,834.7 L2538.3,824.0 L2521.1,813.6 L2503.7,803.4 L2486.3,793.3 L2468.6,783.6 L2450.8,774.2 L2432.9,764.9 L2414.9,755.9 L2396.7,747.0 L2378.6,738.0 L2360.4,729.3 L2341.8,721.1 L2323.1,713.2 L2304.3,705.5 L2285.4,697.8 L2266.5,690.3 L2247.5,682.7 L2228.5,675.3 L2209.5,667.9 L2190.5,660.5 L2171.4,653.1 L2152.2,645.9 L2133.1,638.8 L2113.9,631.7 L2094.6,624.6 L2075.4,617.6 L2056.1,610.7 L2036.7,603.9 L2017.2,597.1 L1997.7,590.5 L1978.2,583.9 L1958.6,577.5 L1939.0,571.1 L1919.3,564.8 L1899.6,558.6 L1879.7,552.5 L1859.8,546.6 L1839.8,540.9 L1819.6,535.4 L1799.3,530.0 L1779.0,524.8 L1758.7,519.6 L1738.2,514.5 L1717.8,509.5 L1697.3,504.5 L1676.8,499.6 L1656.3,494.7 L1635.7,489.9 L1615.1,485.1 L1594.4,480.4 L1573.8,475.7 L1553.1,471.1 L1532.3,466.5 L1511.6,462.0 L1490.8,457.5 L1470.0,453.1 L1449.0,448.9 L1427.9,444.9 L1406.6,441.4 L1385.2,437.9 L1363.8,434.5 L1342.4,431.0 L1321.0,427.6 L1299.0,425.1 L1272.3,430.5 L1249.9,428.8 L1227.9,426.3 L1205.9,423.8 L1184.0,421.3 L1161.9,418.9 L1139.9,416.5 L1117.9,414.0 L1096.0,411.5 L1074.0,409.0 L1052.1,406.3 L1030.4,403.4 L1008.7,400.5 L986.7,398.0 L964.6,395.8 L942.3,393.9 L920.2,391.6 L897.0,391.0 L874.2,390.0 L851.6,388.6 L825.6,392.7 L801.1,394.4 L778.2,393.4 L755.3,392.5 L732.4,391.6 L709.4,390.7 L686.5,389.9 L663.5,389.0 L640.6,388.2 L617.6,387.3 L594.5,386.7 L571.5,386.0 L548.4,385.4 L525.3,384.7 L502.2,384.2 L478.8,384.0 L454.9,384.7 L431.0,385.4Z" fill="#fff" fill-opacity="0.105"/>
<path d="M431.0,381.8 L455.5,380.1 L480.0,378.4 L503.8,377.9 L527.2,378.0 L550.6,378.3 L573.9,378.5 L597.2,378.8 L620.6,379.0 L643.8,379.4 L667.1,379.8 L690.4,380.2 L713.6,380.6 L736.9,381.0 L760.0,381.5 L783.2,382.1 L806.4,382.6 L831.8,379.4 L859.3,372.7 L883.5,371.6 L907.2,371.2 L930.3,371.8 L952.0,374.8 L974.0,377.3 L995.7,380.3 L1017.7,382.8 L1040.2,384.4 L1062.7,386.1 L1084.9,388.2 L1106.9,390.8 L1128.8,393.4 L1150.7,396.0 L1172.7,398.5 L1194.7,400.9 L1216.9,403.2 L1239.0,405.4 L1261.2,407.7 L1284.0,408.8 L1312.8,400.0 L1334.9,402.3 L1356.1,406.1 L1377.3,409.9 L1398.5,413.7 L1419.8,417.4 L1441.2,421.0 L1462.1,425.2 L1482.9,429.7 L1503.9,433.8 L1524.9,438.0 L1545.9,442.2 L1566.8,446.5 L1587.7,450.8 L1608.5,455.3 L1629.3,459.8 L1650.0,464.4 L1670.7,469.0 L1691.4,473.8 L1712.0,478.6 L1732.5,483.5 L1753.0,488.5 L1773.4,493.6 L1793.8,498.8 L1814.1,504.1 L1834.3,509.6 L1854.4,515.2 L1874.4,521.1 L1894.3,527.2 L1914.0,533.5 L1933.6,539.9 L1953.2,546.4 L1972.8,552.9 L1992.3,559.5 L2011.8,566.1 L2031.2,572.9 L2050.6,579.9 L2069.9,586.8 L2089.2,593.9 L2108.4,601.0 L2127.6,608.2 L2146.7,615.4 L2165.8,622.8 L2184.9,630.1 L2204.0,637.4 L2223.1,644.7 L2242.2,652.1 L2261.2,659.5 L2280.2,667.0 L2299.2,674.6 L2318.1,682.1 L2337.0,689.8 L2355.8,697.7 L2374.3,706.0 L2392.2,715.4 L2409.6,725.5 L2427.1,735.5 L2444.4,745.7 L2461.6,756.3 L2478.6,767.1 L2495.7,777.7 L2513.2,787.8 L2530.5,798.0 L2547.7,808.6 L2564.5,819.6 L2581.1,831.1 L2597.4,843.2 L2613.3,855.8 L2628.9,868.9 L2644.2,882.7 L2659.3,896.6 L2674.1,911.0 L2688.8,925.7 L2703.3,940.7 L2717.6,956.0 L2731.5,972.0 L2744.3,989.8 L2756.4,1008.8 L2767.4,1029.7 L2777.5,1052.0 L2785.4,1078.0 L2777.0,1131.1 L2777.0,1130.0 L2781.6,1083.2 L2773.5,1057.7 L2763.5,1035.2 L2752.2,1015.0 L2739.9,996.3 L2726.3,979.8 L2712.1,964.5 L2697.2,950.2 L2681.9,936.5 L2666.6,922.9 L2651.2,909.5 L2635.6,896.4 L2619.6,884.0 L2603.3,872.0 L2586.8,860.4 L2570.1,849.1 L2553.2,838.2 L2536.1,827.5 L2518.9,817.1 L2501.5,807.0 L2484.1,796.9 L2466.3,787.4 L2448.3,778.3 L2430.2,769.3 L2412.1,760.6 L2393.8,751.9 L2375.5,743.2 L2357.2,734.6 L2338.6,726.5 L2319.9,718.6 L2301.1,710.8 L2282.2,703.2 L2263.3,695.6 L2244.4,688.1 L2225.4,680.6 L2206.4,673.2 L2187.3,665.8 L2168.3,658.4 L2149.1,651.3 L2129.9,644.1 L2110.7,637.1 L2091.5,630.0 L2072.2,623.1 L2052.9,616.1 L2033.5,609.4 L2014.0,602.7 L1994.5,596.1 L1975.0,589.6 L1955.4,583.1 L1935.8,576.7 L1916.0,570.5 L1896.2,564.3 L1876.4,558.3 L1856.5,552.4 L1836.4,546.8 L1816.2,541.3 L1796.0,536.0 L1775.6,530.7 L1755.3,525.6 L1734.9,520.5 L1714.4,515.4 L1694.0,510.4 L1673.5,505.5 L1652.9,500.6 L1632.4,495.7 L1611.8,490.9 L1591.2,486.1 L1570.6,481.4 L1549.9,476.7 L1529.2,472.1 L1508.5,467.5 L1487.8,463.0 L1467.0,458.5 L1446.0,454.3 L1424.9,450.4 L1403.6,446.9 L1382.2,443.4 L1360.7,440.1 L1339.3,436.7 L1317.8,433.4 L1295.9,430.9 L1269.7,435.4 L1247.3,433.6 L1225.4,431.1 L1203.4,428.5 L1181.5,426.0 L1159.4,423.6 L1137.4,421.2 L1115.4,418.7 L1093.4,416.3 L1071.5,413.8 L1049.7,410.9 L1028.2,407.7 L1006.6,404.6 L984.6,402.1 L962.4,400.0 L940.0,398.2 L917.8,396.1 L894.7,395.5 L872.1,394.2 L849.8,392.2 L824.2,395.7 L799.9,397.1 L777.1,396.0 L754.2,395.0 L731.4,394.0 L708.5,393.1 L685.6,392.1 L662.7,391.2 L639.8,390.2 L616.9,389.3 L593.9,388.5 L570.9,387.7 L547.9,387.0 L524.8,386.3 L501.8,385.6 L478.5,385.3 L454.7,385.8 L431.0,386.2Z" fill="#fff" fill-opacity="0.105"/>
<path d="M431.0,381.8 L455.5,380.1 L480.0,378.4 L503.8,377.9 L527.2,378.0 L550.6,378.3 L573.9,378.5 L597.2,378.8 L620.6,379.0 L643.8,379.4 L667.1,379.8 L690.4,380.2 L713.6,380.6 L736.9,381.0 L760.0,381.5 L783.2,382.1 L806.4,382.6 L831.8,379.4 L859.3,372.7 L883.5,371.6 L907.2,371.2 L930.3,371.8 L952.0,374.8 L974.0,377.3 L995.7,380.3 L1017.7,382.8 L1040.2,384.4 L1062.7,386.1 L1084.9,388.2 L1106.9,390.8 L1128.8,393.4 L1150.7,396.0 L1172.7,398.5 L1194.7,400.9 L1216.9,403.2 L1239.0,405.4 L1261.2,407.7 L1284.0,408.8 L1312.8,400.0 L1334.9,402.3 L1356.1,406.1 L1377.3,409.9 L1398.5,413.7 L1419.8,417.4 L1441.2,421.0 L1462.1,425.2 L1482.9,429.7 L1503.9,433.8 L1524.9,438.0 L1545.9,442.2 L1566.8,446.5 L1587.7,450.8 L1608.5,455.3 L1629.3,459.8 L1650.0,464.4 L1670.7,469.0 L1691.4,473.8 L1712.0,478.6 L1732.5,483.5 L1753.0,488.5 L1773.4,493.6 L1793.8,498.8 L1814.1,504.1 L1834.3,509.6 L1854.4,515.2 L1874.4,521.1 L1894.3,527.2 L1914.0,533.5 L1933.6,539.9 L1953.2,546.4 L1972.8,552.9 L1992.3,559.5 L2011.8,566.1 L2031.2,572.9 L2050.6,579.9 L2069.9,586.8 L2089.2,593.9 L2108.4,601.0 L2127.6,608.2 L2146.7,615.4 L2165.8,622.8 L2184.9,630.1 L2204.0,637.4 L2223.1,644.7 L2242.2,652.1 L2261.2,659.5 L2280.2,667.0 L2299.2,674.6 L2318.1,682.1 L2337.0,689.8 L2355.8,697.7 L2374.3,706.0 L2392.2,715.4 L2409.6,725.5 L2427.1,735.5 L2444.4,745.7 L2461.6,756.3 L2478.6,767.1 L2495.7,777.7 L2513.2,787.8 L2530.5,798.0 L2547.7,808.6 L2564.5,819.6 L2581.1,831.1 L2597.4,843.2 L2613.3,855.8 L2628.9,868.9 L2644.2,882.7 L2659.3,896.6 L2674.1,911.0 L2688.8,925.7 L2703.3,940.7 L2717.6,956.0 L2731.5,972.0 L2744.3,989.8 L2756.4,1008.8 L2767.4,1029.7 L2777.5,1052.0 L2785.4,1078.0 L2777.0,1131.1 L2777.0,1129.7 L2780.8,1084.3 L2772.6,1058.8 L2762.7,1036.3 L2751.3,1016.2 L2739.0,997.6 L2725.2,981.4 L2710.9,966.2 L2695.9,952.2 L2680.5,938.7 L2665.1,925.3 L2649.5,912.2 L2633.8,899.3 L2617.6,887.1 L2601.2,875.3 L2584.6,863.9 L2567.8,852.8 L2550.9,842.0 L2533.8,831.4 L2516.5,821.1 L2499.1,810.9 L2481.7,800.9 L2463.8,791.7 L2445.6,782.9 L2427.3,774.2 L2408.9,765.7 L2390.5,757.4 L2372.1,749.0 L2353.7,740.5 L2335.1,732.4 L2316.4,724.5 L2297.6,716.7 L2278.7,709.1 L2259.8,701.5 L2240.9,694.0 L2221.9,686.5 L2202.9,679.1 L2183.9,671.6 L2164.9,664.3 L2145.7,657.1 L2126.5,650.1 L2107.2,643.0 L2088.0,636.0 L2068.7,629.1 L2049.4,622.2 L2029.9,615.5 L2010.5,608.8 L1990.9,602.3 L1971.4,595.8 L1951.8,589.3 L1932.2,582.9 L1912.4,576.8 L1892.6,570.7 L1872.7,564.7 L1852.8,558.9 L1832.7,553.3 L1812.5,547.8 L1792.2,542.5 L1771.9,537.3 L1751.5,532.2 L1731.1,527.1 L1710.7,522.0 L1690.2,517.0 L1669.7,512.0 L1649.3,507.1 L1628.7,502.2 L1608.2,497.3 L1587.6,492.5 L1567.1,487.7 L1546.4,483.0 L1525.8,478.3 L1505.1,473.6 L1484.5,469.0 L1463.8,464.4 L1442.7,460.4 L1421.6,456.5 L1400.2,453.0 L1378.8,449.6 L1357.3,446.3 L1335.8,443.0 L1314.3,439.8 L1292.4,437.3 L1266.7,440.9 L1244.4,438.9 L1222.5,436.3 L1200.6,433.7 L1178.7,431.1 L1156.7,428.8 L1134.7,426.4 L1112.7,424.0 L1090.7,421.5 L1068.7,419.1 L1047.0,416.1 L1025.7,412.6 L1004.3,409.1 L982.4,406.6 L960.0,404.7 L937.6,403.1 L915.3,401.1 L892.1,400.6 L869.7,398.9 L847.8,396.2 L822.6,399.1 L798.6,400.1 L775.8,398.9 L753.0,397.8 L730.2,396.7 L707.4,395.7 L684.6,394.6 L661.8,393.5 L639.0,392.4 L616.1,391.4 L593.2,390.5 L570.3,389.6 L547.3,388.8 L524.4,388.0 L501.4,387.2 L478.2,386.8 L454.6,387.0 L431.0,387.2Z" fill="#fff" fill-opacity="0.105"/>
<path d="M431.0,381.8 L455.5,380.1 L480.0,378.4 L503.8,377.9 L527.2,378.0 L550.6,378.3 L573.9,378.5 L597.2,378.8 L620.6,379.0 L643.8,379.4 L667.1,379.8 L690.4,380.2 L713.6,380.6 L736.9,381.0 L760.0,381.5 L783.2,382.1 L806.4,382.6 L831.8,379.4 L859.3,372.7 L883.5,371.6 L907.2,371.2 L930.3,371.8 L952.0,374.8 L974.0,377.3 L995.7,380.3 L1017.7,382.8 L1040.2,384.4 L1062.7,386.1 L1084.9,388.2 L1106.9,390.8 L1128.8,393.4 L1150.7,396.0 L1172.7,398.5 L1194.7,400.9 L1216.9,403.2 L1239.0,405.4 L1261.2,407.7 L1284.0,408.8 L1312.8,400.0 L1334.9,402.3 L1356.1,406.1 L1377.3,409.9 L1398.5,413.7 L1419.8,417.4 L1441.2,421.0 L1462.1,425.2 L1482.9,429.7 L1503.9,433.8 L1524.9,438.0 L1545.9,442.2 L1566.8,446.5 L1587.7,450.8 L1608.5,455.3 L1629.3,459.8 L1650.0,464.4 L1670.7,469.0 L1691.4,473.8 L1712.0,478.6 L1732.5,483.5 L1753.0,488.5 L1773.4,493.6 L1793.8,498.8 L1814.1,504.1 L1834.3,509.6 L1854.4,515.2 L1874.4,521.1 L1894.3,527.2 L1914.0,533.5 L1933.6,539.9 L1953.2,546.4 L1972.8,552.9 L1992.3,559.5 L2011.8,566.1 L2031.2,572.9 L2050.6,579.9 L2069.9,586.8 L2089.2,593.9 L2108.4,601.0 L2127.6,608.2 L2146.7,615.4 L2165.8,622.8 L2184.9,630.1 L2204.0,637.4 L2223.1,644.7 L2242.2,652.1 L2261.2,659.5 L2280.2,667.0 L2299.2,674.6 L2318.1,682.1 L2337.0,689.8 L2355.8,697.7 L2374.3,706.0 L2392.2,715.4 L2409.6,725.5 L2427.1,735.5 L2444.4,745.7 L2461.6,756.3 L2478.6,767.1 L2495.7,777.7 L2513.2,787.8 L2530.5,798.0 L2547.7,808.6 L2564.5,819.6 L2581.1,831.1 L2597.4,843.2 L2613.3,855.8 L2628.9,868.9 L2644.2,882.7 L2659.3,896.6 L2674.1,911.0 L2688.8,925.7 L2703.3,940.7 L2717.6,956.0 L2731.5,972.0 L2744.3,989.8 L2756.4,1008.8 L2767.4,1029.7 L2777.5,1052.0 L2785.4,1078.0 L2777.0,1131.1 L2777.0,1129.5 L2780.0,1085.4 L2771.7,1060.1 L2761.8,1037.6 L2750.3,1017.6 L2738.0,999.0 L2724.1,983.2 L2709.6,968.1 L2694.5,954.3 L2679.0,941.1 L2663.4,928.0 L2647.7,915.0 L2631.9,902.3 L2615.6,890.4 L2599.0,879.0 L2582.3,867.8 L2565.4,856.8 L2548.3,846.1 L2531.2,835.6 L2513.9,825.3 L2496.5,815.2 L2479.1,805.1 L2461.0,796.2 L2442.6,787.8 L2424.2,779.5 L2405.6,771.3 L2387.0,763.3 L2368.4,755.2 L2349.9,746.9 L2331.3,738.8 L2312.6,730.9 L2293.8,723.1 L2275.0,715.4 L2256.1,707.9 L2237.1,700.4 L2218.2,692.9 L2199.2,685.4 L2180.2,678.0 L2161.2,670.6 L2142.0,663.5 L2122.7,656.5 L2103.5,649.5 L2084.2,642.5 L2064.9,635.6 L2045.6,628.7 L2026.1,622.0 L2006.6,615.5 L1987.1,608.9 L1967.5,602.5 L1947.9,596.1 L1928.3,589.7 L1908.5,583.6 L1888.6,577.6 L1868.7,571.7 L1848.8,565.9 L1828.7,560.3 L1808.4,554.9 L1788.2,549.6 L1767.8,544.4 L1747.5,539.3 L1727.1,534.2 L1706.7,529.1 L1686.2,524.1 L1665.8,519.1 L1645.3,514.1 L1624.8,509.2 L1604.3,504.2 L1583.8,499.4 L1563.2,494.5 L1542.7,489.7 L1522.1,484.9 L1501.5,480.2 L1480.9,475.5 L1460.2,470.8 L1439.1,466.9 L1417.9,463.1 L1396.6,459.6 L1375.2,456.2 L1353.6,453.0 L1332.1,449.8 L1310.5,446.7 L1288.6,444.2 L1263.5,446.9 L1241.3,444.7 L1219.5,442.1 L1197.6,439.4 L1175.8,436.7 L1153.7,434.4 L1131.7,432.0 L1109.7,429.6 L1087.7,427.2 L1065.7,424.8 L1044.2,421.6 L1023.0,417.8 L1001.8,413.9 L979.9,411.4 L957.5,409.7 L934.9,408.3 L912.5,406.5 L889.4,406.0 L867.2,403.9 L845.7,400.5 L821.0,402.7 L797.2,403.3 L774.5,402.1 L751.7,400.8 L729.0,399.6 L706.3,398.4 L683.5,397.3 L660.8,396.1 L638.1,394.9 L615.3,393.7 L592.5,392.6 L569.6,391.7 L546.7,390.7 L523.8,389.8 L500.9,388.9 L477.8,388.3 L454.4,388.2 L431.0,388.2Z" fill="#fff" fill-opacity="0.105"/>
<path d="M431.0,381.8 L455.5,380.1 L480.0,378.4 L503.8,377.9 L527.2,378.0 L550.6,378.3 L573.9,378.5 L597.2,378.8 L620.6,379.0 L643.8,379.4 L667.1,379.8 L690.4,380.2 L713.6,380.6 L736.9,381.0 L760.0,381.5 L783.2,382.1 L806.4,382.6 L831.8,379.4 L859.3,372.7 L883.5,371.6 L907.2,371.2 L930.3,371.8 L952.0,374.8 L974.0,377.3 L995.7,380.3 L1017.7,382.8 L1040.2,384.4 L1062.7,386.1 L1084.9,388.2 L1106.9,390.8 L1128.8,393.4 L1150.7,396.0 L1172.7,398.5 L1194.7,400.9 L1216.9,403.2 L1239.0,405.4 L1261.2,407.7 L1284.0,408.8 L1312.8,400.0 L1334.9,402.3 L1356.1,406.1 L1377.3,409.9 L1398.5,413.7 L1419.8,417.4 L1441.2,421.0 L1462.1,425.2 L1482.9,429.7 L1503.9,433.8 L1524.9,438.0 L1545.9,442.2 L1566.8,446.5 L1587.7,450.8 L1608.5,455.3 L1629.3,459.8 L1650.0,464.4 L1670.7,469.0 L1691.4,473.8 L1712.0,478.6 L1732.5,483.5 L1753.0,488.5 L1773.4,493.6 L1793.8,498.8 L1814.1,504.1 L1834.3,509.6 L1854.4,515.2 L1874.4,521.1 L1894.3,527.2 L1914.0,533.5 L1933.6,539.9 L1953.2,546.4 L1972.8,552.9 L1992.3,559.5 L2011.8,566.1 L2031.2,572.9 L2050.6,579.9 L2069.9,586.8 L2089.2,593.9 L2108.4,601.0 L2127.6,608.2 L2146.7,615.4 L2165.8,622.8 L2184.9,630.1 L2204.0,637.4 L2223.1,644.7 L2242.2,652.1 L2261.2,659.5 L2280.2,667.0 L2299.2,674.6 L2318.1,682.1 L2337.0,689.8 L2355.8,697.7 L2374.3,706.0 L2392.2,715.4 L2409.6,725.5 L2427.1,735.5 L2444.4,745.7 L2461.6,756.3 L2478.6,767.1 L2495.7,777.7 L2513.2,787.8 L2530.5,798.0 L2547.7,808.6 L2564.5,819.6 L2581.1,831.1 L2597.4,843.2 L2613.3,855.8 L2628.9,868.9 L2644.2,882.7 L2659.3,896.6 L2674.1,911.0 L2688.8,925.7 L2703.3,940.7 L2717.6,956.0 L2731.5,972.0 L2744.3,989.8 L2756.4,1008.8 L2767.4,1029.7 L2777.5,1052.0 L2785.4,1078.0 L2777.0,1131.1 L2777.0,1129.2 L2779.1,1086.7 L2770.8,1061.4 L2760.9,1038.9 L2749.3,1019.1 L2737.0,1000.6 L2722.9,985.0 L2708.3,970.1 L2693.0,956.5 L2677.4,943.6 L2661.6,930.8 L2645.8,918.1 L2629.8,905.6 L2613.4,894.0 L2596.6,882.8 L2579.8,871.8 L2562.8,861.1 L2545.7,850.5 L2528.5,840.1 L2511.2,829.8 L2493.8,819.7 L2476.4,809.7 L2458.1,801.0 L2439.5,793.0 L2420.8,785.1 L2402.0,777.2 L2383.2,769.5 L2364.5,761.8 L2345.9,753.6 L2327.3,745.6 L2308.5,737.7 L2289.8,729.9 L2271.0,722.2 L2252.0,714.6 L2233.1,707.1 L2214.2,699.6 L2195.2,692.1 L2176.2,684.7 L2157.2,677.3 L2138.0,670.2 L2118.8,663.3 L2099.5,656.3 L2080.2,649.4 L2060.9,642.5 L2041.6,635.6 L2022.1,629.0 L2002.6,622.5 L1983.0,616.0 L1963.4,609.6 L1943.8,603.2 L1924.2,596.8 L1904.3,590.8 L1884.4,584.9 L1864.5,579.0 L1844.5,573.3 L1824.4,567.7 L1804.1,562.4 L1783.8,557.2 L1763.5,552.0 L1743.2,546.8 L1722.8,541.7 L1702.4,536.7 L1682.0,531.6 L1661.5,526.6 L1641.1,521.6 L1620.6,516.6 L1600.2,511.6 L1579.7,506.7 L1559.2,501.8 L1538.7,496.9 L1518.2,492.0 L1497.6,487.2 L1477.1,482.4 L1456.5,477.6 L1435.3,473.8 L1414.1,470.1 L1392.7,466.6 L1371.3,463.2 L1349.7,460.2 L1328.1,457.1 L1306.5,454.0 L1284.6,451.5 L1260.1,453.2 L1238.1,450.9 L1216.3,448.1 L1194.5,445.4 L1172.7,442.6 L1150.6,440.3 L1128.6,438.0 L1106.5,435.6 L1084.5,433.2 L1062.5,430.9 L1041.1,427.4 L1020.2,423.3 L999.2,419.1 L977.3,416.6 L954.7,415.1 L932.1,413.8 L909.5,412.3 L886.4,411.7 L864.5,409.2 L843.5,405.1 L819.2,406.6 L795.6,406.7 L773.0,405.4 L750.4,404.0 L727.7,402.7 L705.0,401.4 L682.4,400.1 L659.8,398.7 L637.1,397.4 L614.5,396.1 L591.7,394.9 L568.9,393.9 L546.1,392.8 L523.3,391.8 L500.4,390.7 L477.5,389.9 L454.2,389.6 L431.0,389.2Z" fill="#fff" fill-opacity="0.105"/>
<path d="M431.0,381.8 L455.5,380.1 L480.0,378.4 L503.8,377.9 L527.2,378.0 L550.6,378.3 L573.9,378.5 L597.2,378.8 L620.6,379.0 L643.8,379.4 L667.1,379.8 L690.4,380.2 L713.6,380.6 L736.9,381.0 L760.0,381.5 L783.2,382.1 L806.4,382.6 L831.8,379.4 L859.3,372.7 L883.5,371.6 L907.2,371.2 L930.3,371.8 L952.0,374.8 L974.0,377.3 L995.7,380.3 L1017.7,382.8 L1040.2,384.4 L1062.7,386.1 L1084.9,388.2 L1106.9,390.8 L1128.8,393.4 L1150.7,396.0 L1172.7,398.5 L1194.7,400.9 L1216.9,403.2 L1239.0,405.4 L1261.2,407.7 L1284.0,408.8 L1312.8,400.0 L1334.9,402.3 L1356.1,406.1 L1377.3,409.9 L1398.5,413.7 L1419.8,417.4 L1441.2,421.0 L1462.1,425.2 L1482.9,429.7 L1503.9,433.8 L1524.9,438.0 L1545.9,442.2 L1566.8,446.5 L1587.7,450.8 L1608.5,455.3 L1629.3,459.8 L1650.0,464.4 L1670.7,469.0 L1691.4,473.8 L1712.0,478.6 L1732.5,483.5 L1753.0,488.5 L1773.4,493.6 L1793.8,498.8 L1814.1,504.1 L1834.3,509.6 L1854.4,515.2 L1874.4,521.1 L1894.3,527.2 L1914.0,533.5 L1933.6,539.9 L1953.2,546.4 L1972.8,552.9 L1992.3,559.5 L2011.8,566.1 L2031.2,572.9 L2050.6,579.9 L2069.9,586.8 L2089.2,593.9 L2108.4,601.0 L2127.6,608.2 L2146.7,615.4 L2165.8,622.8 L2184.9,630.1 L2204.0,637.4 L2223.1,644.7 L2242.2,652.1 L2261.2,659.5 L2280.2,667.0 L2299.2,674.6 L2318.1,682.1 L2337.0,689.8 L2355.8,697.7 L2374.3,706.0 L2392.2,715.4 L2409.6,725.5 L2427.1,735.5 L2444.4,745.7 L2461.6,756.3 L2478.6,767.1 L2495.7,777.7 L2513.2,787.8 L2530.5,798.0 L2547.7,808.6 L2564.5,819.6 L2581.1,831.1 L2597.4,843.2 L2613.3,855.8 L2628.9,868.9 L2644.2,882.7 L2659.3,896.6 L2674.1,911.0 L2688.8,925.7 L2703.3,940.7 L2717.6,956.0 L2731.5,972.0 L2744.3,989.8 L2756.4,1008.8 L2767.4,1029.7 L2777.5,1052.0 L2785.4,1078.0 L2777.0,1131.1 L2777.0,1128.9 L2778.2,1087.9 L2769.8,1062.8 L2759.9,1040.3 L2748.2,1020.6 L2735.9,1002.2 L2721.6,987.0 L2706.9,972.3 L2691.5,958.9 L2675.6,946.3 L2659.7,933.8 L2643.8,921.3 L2627.7,909.0 L2611.0,897.7 L2594.1,886.8 L2577.1,876.1 L2560.0,865.5 L2542.8,855.1 L2525.6,844.8 L2508.3,834.6 L2490.9,824.5 L2473.5,814.4 L2455.1,806.1 L2436.2,798.5 L2417.3,790.9 L2398.3,783.5 L2379.3,776.1 L2360.3,768.7 L2341.6,760.8 L2323.0,752.8 L2304.3,744.9 L2285.5,737.1 L2266.7,729.3 L2247.8,721.8 L2228.9,714.2 L2210.0,706.7 L2191.0,699.2 L2172.1,691.8 L2153.1,684.3 L2133.9,677.3 L2114.6,670.4 L2095.3,663.5 L2076.0,656.6 L2056.7,649.8 L2037.3,642.9 L2017.8,636.4 L1998.3,629.9 L1978.7,623.5 L1959.1,617.1 L1939.5,610.7 L1919.8,604.4 L1900.0,598.4 L1880.0,592.6 L1860.1,586.8 L1840.1,581.1 L1819.9,575.6 L1799.6,570.3 L1779.3,565.1 L1759.0,559.9 L1738.6,554.8 L1718.3,549.7 L1697.9,544.6 L1677.5,539.5 L1657.1,534.5 L1636.7,529.4 L1616.2,524.4 L1595.8,519.3 L1575.4,514.3 L1555.0,509.4 L1534.5,504.4 L1514.0,499.4 L1493.5,494.5 L1473.0,489.6 L1452.5,484.7 L1431.3,481.0 L1410.0,477.4 L1388.7,474.0 L1367.2,470.6 L1345.6,467.7 L1323.9,464.7 L1302.3,461.7 L1280.4,459.2 L1256.6,459.8 L1234.6,457.3 L1212.9,454.5 L1191.1,451.7 L1169.4,448.9 L1147.3,446.6 L1125.3,444.2 L1103.2,441.9 L1081.2,439.6 L1059.1,437.2 L1037.9,433.6 L1017.2,429.1 L996.5,424.5 L974.5,422.0 L951.8,420.8 L929.1,419.6 L906.4,418.3 L883.3,417.8 L861.6,414.9 L841.1,410.0 L817.3,410.7 L794.0,410.3 L771.5,408.9 L748.9,407.4 L726.4,405.9 L703.8,404.5 L681.2,403.1 L658.7,401.6 L636.1,400.1 L613.5,398.6 L590.9,397.3 L568.2,396.2 L545.4,395.0 L522.7,393.8 L499.9,392.6 L477.1,391.7 L454.1,391.0 L431.0,390.4Z" fill="#fff" fill-opacity="0.105"/>
<path d="M431.0,381.8 L455.5,380.1 L480.0,378.4 L503.8,377.9 L527.2,378.0 L550.6,378.3 L573.9,378.5 L597.2,378.8 L620.6,379.0 L643.8,379.4 L667.1,379.8 L690.4,380.2 L713.6,380.6 L736.9,381.0 L760.0,381.5 L783.2,382.1 L806.4,382.6 L831.8,379.4 L859.3,372.7 L883.5,371.6 L907.2,371.2 L930.3,371.8 L952.0,374.8 L974.0,377.3 L995.7,380.3 L1017.7,382.8 L1040.2,384.4 L1062.7,386.1 L1084.9,388.2 L1106.9,390.8 L1128.8,393.4 L1150.7,396.0 L1172.7,398.5 L1194.7,400.9 L1216.9,403.2 L1239.0,405.4 L1261.2,407.7 L1284.0,408.8 L1312.8,400.0 L1334.9,402.3 L1356.1,406.1 L1377.3,409.9 L1398.5,413.7 L1419.8,417.4 L1441.2,421.0 L1462.1,425.2 L1482.9,429.7 L1503.9,433.8 L1524.9,438.0 L1545.9,442.2 L1566.8,446.5 L1587.7,450.8 L1608.5,455.3 L1629.3,459.8 L1650.0,464.4 L1670.7,469.0 L1691.4,473.8 L1712.0,478.6 L1732.5,483.5 L1753.0,488.5 L1773.4,493.6 L1793.8,498.8 L1814.1,504.1 L1834.3,509.6 L1854.4,515.2 L1874.4,521.1 L1894.3,527.2 L1914.0,533.5 L1933.6,539.9 L1953.2,546.4 L1972.8,552.9 L1992.3,559.5 L2011.8,566.1 L2031.2,572.9 L2050.6,579.9 L2069.9,586.8 L2089.2,593.9 L2108.4,601.0 L2127.6,608.2 L2146.7,615.4 L2165.8,622.8 L2184.9,630.1 L2204.0,637.4 L2223.1,644.7 L2242.2,652.1 L2261.2,659.5 L2280.2,667.0 L2299.2,674.6 L2318.1,682.1 L2337.0,689.8 L2355.8,697.7 L2374.3,706.0 L2392.2,715.4 L2409.6,725.5 L2427.1,735.5 L2444.4,745.7 L2461.6,756.3 L2478.6,767.1 L2495.7,777.7 L2513.2,787.8 L2530.5,798.0 L2547.7,808.6 L2564.5,819.6 L2581.1,831.1 L2597.4,843.2 L2613.3,855.8 L2628.9,868.9 L2644.2,882.7 L2659.3,896.6 L2674.1,911.0 L2688.8,925.7 L2703.3,940.7 L2717.6,956.0 L2731.5,972.0 L2744.3,989.8 L2756.4,1008.8 L2767.4,1029.7 L2777.5,1052.0 L2785.4,1078.0 L2777.0,1131.1 L2777.0,1128.6 L2777.2,1089.3 L2768.7,1064.3 L2758.9,1041.7 L2747.1,1022.2 L2734.7,1003.9 L2720.2,989.0 L2705.5,974.5 L2689.9,961.4 L2673.9,949.1 L2657.8,936.8 L2641.6,924.7 L2625.5,912.6 L2608.6,901.6 L2591.5,891.0 L2574.4,880.6 L2557.2,870.2 L2539.9,859.9 L2522.6,849.7 L2505.3,839.6 L2487.9,829.5 L2470.5,819.4 L2451.9,811.4 L2432.7,804.2 L2413.6,797.1 L2394.4,790.0 L2375.2,783.0 L2356.0,775.9 L2337.2,768.2 L2318.5,760.2 L2299.8,752.3 L2281.1,744.5 L2262.3,736.7 L2243.4,729.2 L2224.5,721.7 L2205.6,714.1 L2186.7,706.6 L2167.8,699.1 L2148.8,691.7 L2129.5,684.7 L2110.2,677.9 L2090.9,671.0 L2071.6,664.2 L2052.3,657.3 L2032.9,650.5 L2013.4,644.0 L1993.8,637.6 L1974.2,631.2 L1954.6,624.9 L1934.9,618.6 L1915.3,612.2 L1895.4,606.3 L1875.4,600.6 L1855.4,594.9 L1835.4,589.2 L1815.2,583.8 L1794.9,578.6 L1774.6,573.4 L1754.3,568.2 L1733.9,563.1 L1713.6,558.0 L1693.2,552.9 L1672.8,547.8 L1652.4,542.7 L1632.0,537.6 L1611.7,532.5 L1591.3,527.4 L1570.9,522.4 L1550.5,517.3 L1530.1,512.2 L1509.7,507.2 L1489.3,502.2 L1468.9,497.2 L1448.4,492.2 L1427.1,488.6 L1405.8,485.1 L1384.4,481.7 L1363.0,478.3 L1341.3,475.5 L1319.6,472.6 L1297.9,469.8 L1276.0,467.2 L1252.8,466.7 L1231.0,464.0 L1209.3,461.1 L1187.6,458.3 L1165.9,455.4 L1143.9,453.1 L1121.8,450.8 L1099.7,448.5 L1077.7,446.2 L1055.6,443.9 L1034.5,440.1 L1014.0,435.1 L993.6,430.2 L971.6,427.7 L948.8,426.7 L926.0,425.7 L903.2,424.7 L880.1,424.1 L858.7,420.7 L838.7,415.0 L815.3,414.9 L792.4,414.1 L769.9,412.5 L747.4,410.9 L724.9,409.3 L702.4,407.8 L680.0,406.2 L657.5,404.5 L635.0,402.9 L612.6,401.3 L590.0,399.9 L567.4,398.5 L544.7,397.2 L522.1,395.9 L499.4,394.6 L476.7,393.5 L453.9,392.5 L431.0,391.5Z" fill="#fff" fill-opacity="0.105"/>
<path d="M431.0,381.8 L455.5,380.1 L480.0,378.4 L503.8,377.9 L527.2,378.0 L550.6,378.3 L573.9,378.5 L597.2,378.8 L620.6,379.0 L643.8,379.4 L667.1,379.8 L690.4,380.2 L713.6,380.6 L736.9,381.0 L760.0,381.5 L783.2,382.1 L806.4,382.6 L831.8,379.4 L859.3,372.7 L883.5,371.6 L907.2,371.2 L930.3,371.8 L952.0,374.8 L974.0,377.3 L995.7,380.3 L1017.7,382.8 L1040.2,384.4 L1062.7,386.1 L1084.9,388.2 L1106.9,390.8 L1128.8,393.4 L1150.7,396.0 L1172.7,398.5 L1194.7,400.9 L1216.9,403.2 L1239.0,405.4 L1261.2,407.7 L1284.0,408.8 L1312.8,400.0 L1334.9,402.3 L1356.1,406.1 L1377.3,409.9 L1398.5,413.7 L1419.8,417.4 L1441.2,421.0 L1462.1,425.2 L1482.9,429.7 L1503.9,433.8 L1524.9,438.0 L1545.9,442.2 L1566.8,446.5 L1587.7,450.8 L1608.5,455.3 L1629.3,459.8 L1650.0,464.4 L1670.7,469.0 L1691.4,473.8 L1712.0,478.6 L1732.5,483.5 L1753.0,488.5 L1773.4,493.6 L1793.8,498.8 L1814.1,504.1 L1834.3,509.6 L1854.4,515.2 L1874.4,521.1 L1894.3,527.2 L1914.0,533.5 L1933.6,539.9 L1953.2,546.4 L1972.8,552.9 L1992.3,559.5 L2011.8,566.1 L2031.2,572.9 L2050.6,579.9 L2069.9,586.8 L2089.2,593.9 L2108.4,601.0 L2127.6,608.2 L2146.7,615.4 L2165.8,622.8 L2184.9,630.1 L2204.0,637.4 L2223.1,644.7 L2242.2,652.1 L2261.2,659.5 L2280.2,667.0 L2299.2,674.6 L2318.1,682.1 L2337.0,689.8 L2355.8,697.7 L2374.3,706.0 L2392.2,715.4 L2409.6,725.5 L2427.1,735.5 L2444.4,745.7 L2461.6,756.3 L2478.6,767.1 L2495.7,777.7 L2513.2,787.8 L2530.5,798.0 L2547.7,808.6 L2564.5,819.6 L2581.1,831.1 L2597.4,843.2 L2613.3,855.8 L2628.9,868.9 L2644.2,882.7 L2659.3,896.6 L2674.1,911.0 L2688.8,925.7 L2703.3,940.7 L2717.6,956.0 L2731.5,972.0 L2744.3,989.8 L2756.4,1008.8 L2767.4,1029.7 L2777.5,1052.0 L2785.4,1078.0 L2777.0,1131.1 L2777.0,1128.3 L2776.2,1090.7 L2767.6,1065.8 L2757.8,1043.2 L2746.0,1023.9 L2733.5,1005.6 L2718.8,991.1 L2704.0,976.8 L2688.2,963.9 L2672.0,952.0 L2655.7,940.0 L2639.5,928.1 L2623.2,916.3 L2606.1,905.7 L2588.8,895.4 L2571.5,885.2 L2554.2,875.1 L2536.8,864.9 L2519.5,854.8 L2502.1,844.7 L2484.7,834.6 L2467.3,824.6 L2448.6,816.9 L2429.2,810.1 L2409.8,803.4 L2390.4,796.8 L2370.9,790.1 L2351.5,783.4 L2332.6,775.9 L2313.9,768.0 L2295.2,760.1 L2276.5,752.2 L2257.8,744.5 L2238.9,736.9 L2220.0,729.4 L2201.1,721.8 L2182.2,714.3 L2163.3,706.8 L2144.3,699.3 L2125.0,692.4 L2105.7,685.6 L2086.4,678.8 L2067.0,672.0 L2047.7,665.2 L2028.3,658.4 L2008.8,652.0 L1989.1,645.6 L1969.5,639.3 L1949.9,633.0 L1930.2,626.7 L1910.6,620.4 L1890.7,614.6 L1870.7,608.9 L1850.6,603.3 L1830.6,597.6 L1810.4,592.3 L1790.0,587.1 L1769.7,582.0 L1749.4,576.8 L1729.0,571.7 L1708.7,566.6 L1688.3,561.5 L1667.9,556.4 L1647.6,551.3 L1627.2,546.1 L1606.9,541.0 L1586.6,535.8 L1566.2,530.7 L1545.9,525.5 L1525.6,520.4 L1505.2,515.3 L1484.9,510.1 L1464.5,505.0 L1444.1,499.9 L1422.8,496.5 L1401.4,493.0 L1380.0,489.7 L1358.6,486.4 L1336.8,483.6 L1315.0,480.9 L1293.3,478.1 L1271.4,475.5 L1249.0,473.9 L1227.3,471.0 L1205.6,468.1 L1184.0,465.1 L1162.3,462.1 L1140.3,459.8 L1118.2,457.6 L1096.1,455.3 L1074.1,453.1 L1052.0,450.8 L1031.0,446.7 L1010.8,441.4 L990.6,436.1 L968.7,433.6 L945.7,432.8 L922.7,432.0 L899.8,431.2 L876.7,430.7 L855.6,426.8 L836.1,420.3 L813.3,419.3 L790.6,418.0 L768.2,416.3 L745.8,414.6 L723.4,412.8 L701.0,411.1 L678.7,409.4 L656.3,407.6 L634.0,405.8 L611.6,404.1 L589.1,402.5 L566.6,401.0 L544.0,399.6 L521.4,398.2 L498.9,396.7 L476.3,395.3 L453.7,394.0 L431.0,392.7Z" fill="#fff" fill-opacity="0.105"/>
<path d="M431.0,381.8 L455.5,380.1 L480.0,378.4 L503.8,377.9 L527.2,378.0 L550.6,378.3 L573.9,378.5 L597.2,378.8 L620.6,379.0 L643.8,379.4 L667.1,379.8 L690.4,380.2 L713.6,380.6 L736.9,381.0 L760.0,381.5 L783.2,382.1 L806.4,382.6 L831.8,379.4 L859.3,372.7 L883.5,371.6 L907.2,371.2 L930.3,371.8 L952.0,374.8 L974.0,377.3 L995.7,380.3 L1017.7,382.8 L1040.2,384.4 L1062.7,386.1 L1084.9,388.2 L1106.9,390.8 L1128.8,393.4 L1150.7,396.0 L1172.7,398.5 L1194.7,400.9 L1216.9,403.2 L1239.0,405.4 L1261.2,407.7 L1284.0,408.8 L1312.8,400.0 L1334.9,402.3 L1356.1,406.1 L1377.3,409.9 L1398.5,413.7 L1419.8,417.4 L1441.2,421.0 L1462.1,425.2 L1482.9,429.7 L1503.9,433.8 L1524.9,438.0 L1545.9,442.2 L1566.8,446.5 L1587.7,450.8 L1608.5,455.3 L1629.3,459.8 L1650.0,464.4 L1670.7,469.0 L1691.4,473.8 L1712.0,478.6 L1732.5,483.5 L1753.0,488.5 L1773.4,493.6 L1793.8,498.8 L1814.1,504.1 L1834.3,509.6 L1854.4,515.2 L1874.4,521.1 L1894.3,527.2 L1914.0,533.5 L1933.6,539.9 L1953.2,546.4 L1972.8,552.9 L1992.3,559.5 L2011.8,566.1 L2031.2,572.9 L2050.6,579.9 L2069.9,586.8 L2089.2,593.9 L2108.4,601.0 L2127.6,608.2 L2146.7,615.4 L2165.8,622.8 L2184.9,630.1 L2204.0,637.4 L2223.1,644.7 L2242.2,652.1 L2261.2,659.5 L2280.2,667.0 L2299.2,674.6 L2318.1,682.1 L2337.0,689.8 L2355.8,697.7 L2374.3,706.0 L2392.2,715.4 L2409.6,725.5 L2427.1,735.5 L2444.4,745.7 L2461.6,756.3 L2478.6,767.1 L2495.7,777.7 L2513.2,787.8 L2530.5,798.0 L2547.7,808.6 L2564.5,819.6 L2581.1,831.1 L2597.4,843.2 L2613.3,855.8 L2628.9,868.9 L2644.2,882.7 L2659.3,896.6 L2674.1,911.0 L2688.8,925.7 L2703.3,940.7 L2717.6,956.0 L2731.5,972.0 L2744.3,989.8 L2756.4,1008.8 L2767.4,1029.7 L2777.5,1052.0 L2785.4,1078.0 L2777.0,1131.1 L2777.0,1128.0 L2775.1,1092.1 L2766.5,1067.4 L2756.7,1044.7 L2744.8,1025.6 L2732.3,1007.4 L2717.3,993.3 L2702.4,979.1 L2686.5,966.6 L2670.1,955.0 L2653.6,943.3 L2637.2,931.7 L2620.8,920.1 L2603.5,909.9 L2586.0,899.9 L2568.6,890.0 L2551.1,880.1 L2533.7,870.1 L2516.3,860.1 L2498.9,850.0 L2481.5,840.0 L2464.1,830.0 L2445.1,822.6 L2425.5,816.3 L2405.8,810.0 L2386.2,803.7 L2366.5,797.5 L2346.9,791.2 L2327.9,783.9 L2309.2,776.0 L2290.5,768.1 L2271.8,760.2 L2253.1,752.4 L2234.2,744.9 L2215.3,737.3 L2196.4,729.8 L2177.5,722.3 L2158.6,714.7 L2139.7,707.2 L2120.4,700.4 L2101.0,693.6 L2081.7,686.9 L2062.3,680.1 L2042.9,673.3 L2023.6,666.6 L2004.0,660.2 L1984.3,653.9 L1964.7,647.7 L1945.0,641.4 L1925.4,635.1 L1905.7,628.8 L1885.8,623.1 L1865.7,617.5 L1845.6,611.9 L1825.6,606.4 L1805.3,601.1 L1785.0,596.0 L1764.6,590.8 L1744.3,585.7 L1723.9,580.6 L1703.6,575.5 L1683.3,570.4 L1662.9,565.3 L1642.6,560.1 L1622.3,554.9 L1602.0,549.7 L1581.7,544.5 L1561.4,539.3 L1541.1,534.1 L1520.9,528.8 L1500.6,523.6 L1480.3,518.4 L1460.0,513.2 L1439.7,508.0 L1418.3,504.6 L1396.9,501.3 L1375.5,497.9 L1354.0,494.6 L1332.2,492.0 L1310.4,489.4 L1288.5,486.8 L1266.7,484.2 L1245.0,481.3 L1223.4,478.2 L1201.8,475.2 L1180.2,472.1 L1158.6,469.1 L1136.6,466.8 L1114.5,464.6 L1092.4,462.4 L1070.3,460.2 L1048.3,457.9 L1027.4,453.7 L1007.4,447.9 L987.5,442.2 L965.6,439.7 L942.5,439.1 L919.4,438.5 L896.3,438.0 L873.2,437.4 L852.4,433.1 L833.4,425.7 L811.1,423.9 L788.8,422.0 L766.5,420.2 L744.2,418.3 L721.9,416.5 L699.6,414.6 L677.3,412.7 L655.1,410.8 L632.8,408.8 L610.6,406.9 L588.2,405.2 L565.7,403.6 L543.3,402.0 L520.8,400.5 L498.3,398.9 L475.9,397.3 L453.4,395.6 L431.0,394.0Z" fill="#fff" fill-opacity="0.105"/>
<path d="M425,370 L850,372 L849,405 L700,400 L431,392Z" fill="#fff" fill-opacity="0.35"/>
<path d="M1266,415 L1288,415 L1284,455 L1262,490 L1240,500 L1258,460Z" fill="#fff" fill-opacity="0.3"/>
</g></g></g>
<path d="M90.5,457.0 L90.5,451.0 L92.0,450.3 L135.5,450.3 L169.2,441.3 L208.9,430.4 L248.6,421.0 L314.0,408.6 L377.5,401.7 L424.0,397.0 L429.0,385.0 L428.0,392.0 L423.0,398.7 L409.0,406.6 L377.5,417.5 L314.0,434.4 L256.5,445.8 L208.9,454.2 L159.3,461.7 L129.5,465.1 L99.8,465.1 L93.8,462.7Z" fill="#c3c5c8"/>
<g fill="none" stroke="#ad2433" stroke-width="1.6" stroke-opacity="0.78" stroke-linejoin="round">
<path d="M256.4,446.3 C273.3,453.1 317.0,472.5 357.6,487.0 C398.2,501.5 450.1,517.2 500.0,533.5 C549.9,549.8 601.5,567.2 656.7,585.0 C711.9,602.8 777.1,623.1 831.0,640.0 C884.9,656.9 927.1,669.6 980.0,686.3 C1032.9,703.0 1097.3,724.3 1148.5,740.0 C1199.7,755.7 1238.8,766.2 1287.4,780.7 C1336.0,795.2 1386.6,810.8 1440.0,827.3 C1493.4,843.8 1541.9,859.5 1608.0,880.0 C1674.1,900.5 1772.6,930.4 1836.5,950.4 C1900.4,970.4 1911.0,973.6 1991.4,1000.0 C2071.8,1026.4 2240.6,1082.5 2318.7,1109.0 C2396.8,1135.5 2426.6,1146.4 2460.0,1158.7 C2493.4,1171.0 2499.9,1176.0 2519.0,1183.0 C2538.1,1190.0 2565.3,1198.0 2574.6,1201.0"/>
<path d="M347.7,585.2 C355.9,587.7 382.1,597.0 397.0,600.0 C411.9,603.0 419.8,602.5 437.0,603.0 C454.2,603.5 482.8,603.4 500.0,603.0 C517.2,602.6 526.8,601.7 540.0,600.5 C553.2,599.3 559.5,598.5 579.0,596.0 C598.5,593.5 636.5,588.7 656.7,585.5 C676.9,582.3 684.5,580.2 700.0,577.0 C715.5,573.8 733.1,570.2 749.6,566.4 C766.1,562.6 782.7,558.3 799.2,554.0 C815.7,549.7 834.3,544.7 848.8,540.4 C863.3,536.1 873.6,532.5 886.0,528.0 C898.4,523.5 912.8,517.4 923.1,513.1 C933.4,508.8 939.6,505.9 947.9,502.0 C956.2,498.1 965.0,493.9 972.7,489.6 C980.4,485.3 987.9,480.4 993.9,476.2 C999.9,472.0 1004.3,468.3 1008.8,464.2 C1013.3,460.1 1017.4,455.4 1020.7,451.3 C1024.0,447.2 1026.6,443.4 1028.6,439.4 C1030.6,435.4 1031.8,431.6 1032.6,427.5 C1033.4,423.4 1033.5,419.7 1033.6,414.6 C1033.7,409.5 1033.2,399.8 1033.1,396.8"/>
<path d="M857.0,778.6 C867.0,781.1 897.9,789.9 916.7,793.5 C935.5,797.1 946.3,798.8 970.0,800.0 C993.7,801.2 1027.6,801.6 1059.0,800.5 C1090.4,799.4 1120.3,796.9 1158.4,793.6 C1196.5,790.3 1250.5,785.0 1287.4,780.7 C1324.3,776.4 1354.6,771.8 1380.0,767.8 C1405.4,763.8 1423.5,760.1 1440.0,757.0 C1456.5,753.9 1459.2,752.8 1479.0,749.0 C1498.8,745.2 1532.0,740.3 1558.5,734.0 C1585.0,727.7 1614.7,718.1 1637.8,711.2 C1660.9,704.3 1679.1,699.3 1697.3,692.4 C1715.5,685.5 1732.1,677.4 1747.0,669.6 C1761.9,661.8 1775.0,654.1 1786.6,645.8 C1798.1,637.5 1808.6,629.5 1816.3,620.0 C1824.0,610.5 1829.5,598.7 1832.9,588.5 C1836.3,578.3 1836.7,567.6 1836.8,558.7 C1836.9,549.8 1837.1,540.8 1833.8,535.0 C1830.5,529.2 1819.8,525.8 1817.0,524.0"/>
<path d="M1400.0,944.5 C1409.9,947.3 1439.7,957.3 1459.5,961.3 C1479.3,965.3 1495.8,967.0 1519.0,968.3 C1542.2,969.6 1571.9,969.6 1598.4,968.9 C1624.9,968.2 1651.4,966.0 1677.8,964.3 C1704.2,962.5 1730.5,960.5 1757.0,958.4 C1783.5,956.3 1819.3,953.0 1836.5,951.5 C1853.7,950.0 1841.2,951.5 1860.0,949.5 C1878.8,947.5 1919.5,943.4 1949.3,939.5 C1979.0,935.6 2008.8,930.8 2038.5,926.0 C2068.2,921.2 2101.8,915.7 2127.8,910.5 C2153.8,905.3 2172.4,900.7 2194.7,894.9 C2217.0,889.1 2243.0,882.2 2261.6,875.9 C2280.2,869.6 2293.3,863.8 2306.3,856.9 C2319.3,850.0 2330.1,842.0 2339.8,834.6 C2349.5,827.2 2358.0,819.7 2364.3,812.3 C2370.6,804.9 2374.5,797.8 2377.7,790.0 C2380.9,782.2 2382.6,774.9 2383.3,765.5 C2384.0,756.1 2384.6,741.3 2381.7,733.7 C2378.8,726.1 2368.5,722.1 2365.8,719.8"/>
<path d="M1984.0,1095.5 C1994.3,1097.6 2025.3,1104.8 2046.0,1107.9 C2066.7,1111.0 2081.2,1112.9 2108.0,1114.0 C2134.8,1115.1 2171.9,1115.4 2207.0,1114.6 C2242.1,1113.8 2289.8,1110.9 2318.7,1109.0 C2347.6,1107.1 2362.1,1104.8 2380.7,1103.0 C2399.2,1101.2 2410.3,1100.4 2430.0,1098.0 C2449.7,1095.6 2474.2,1093.0 2499.0,1088.8 C2523.8,1084.6 2555.4,1078.3 2578.6,1073.0 C2601.8,1067.7 2619.8,1063.3 2638.0,1057.0 C2656.2,1050.7 2674.4,1041.9 2687.7,1035.0 C2700.9,1028.1 2710.9,1021.3 2717.5,1015.4 C2724.1,1009.5 2725.4,1005.1 2727.4,999.5 C2729.4,993.9 2730.4,987.3 2729.4,981.7 C2728.4,976.1 2722.7,968.4 2721.4,965.8"/>
<path d="M2306.3,1182.0 C2314.6,1182.8 2340.4,1185.3 2356.0,1186.5 C2371.6,1187.7 2382.7,1189.0 2400.0,1189.0 C2417.3,1189.0 2440.2,1187.5 2460.0,1186.5 C2479.8,1185.5 2495.9,1184.8 2519.0,1183.0 C2542.1,1181.2 2571.9,1178.8 2598.4,1176.0 C2624.9,1173.2 2654.7,1169.7 2677.8,1166.0 C2700.9,1162.3 2720.5,1159.9 2737.0,1154.0 C2753.5,1148.1 2770.3,1134.4 2777.0,1130.5"/>
<path d="M933.4,386.4 L930.4,403.7" stroke-width="1.6"/>
</g>
<defs><linearGradient id="tg" gradientUnits="userSpaceOnUse" x1="431" y1="0" x2="1640" y2="0"><stop offset="0" stop-color="#b8404c" stop-opacity=".75"/><stop offset=".75" stop-color="#b8404c" stop-opacity=".6"/><stop offset="1" stop-color="#b8404c" stop-opacity="0"/></linearGradient></defs>
<path d="M431.0,384.2 L488.0,381.8 L540.0,382.8 L619.0,384.6 L738.0,388.2 L817.5,391.0 L821.4,389.2 L843.0,386.0 L853.0,383.3 L930.5,385.2 L936.5,386.8 L960.0,388.8 L1033.4,397.1 L1158.4,411.4 L1267.5,423.3 L1289.4,423.3 L1300.3,416.8 L1311.0,416.8 L1440.0,438.3 L1618.6,475.4" fill="none" stroke="url(#tg)" stroke-width="2"/>
<path d="M90.5,457.0 L90.5,451.0 L92.0,450.3 L135.5,450.3 L169.2,441.3 L208.9,430.4 L248.6,421.0 L314.0,408.6 L377.5,401.7 L424.0,397.0" fill="none" stroke="#b02a38" stroke-width="1.7" stroke-opacity=".8"/>
<path d="M94.0,461.5 L98.8,459.2 L121.6,453.2 L137.0,449.8" fill="none" stroke="#b02a38" stroke-width="1.7" stroke-opacity=".8"/>
<path d="M91.3,450.5 C91.3,451.8 90.9,456.0 91.3,458.0 C91.7,460.0 92.4,461.5 93.8,462.7 C95.2,463.9 93.8,464.7 99.8,465.1 C105.8,465.5 119.6,465.7 129.5,465.1 C139.4,464.5 146.1,463.5 159.3,461.7 C172.5,459.9 192.7,456.8 208.9,454.2 C225.1,451.6 239.0,449.1 256.5,445.8 C274.0,442.5 293.8,439.1 314.0,434.4 C334.2,429.7 361.7,422.1 377.5,417.5 C393.3,412.9 401.4,409.7 409.0,406.6 C416.6,403.5 419.8,401.1 423.0,398.7 C426.2,396.3 427.0,394.3 428.0,392.0 C429.0,389.7 428.8,386.2 429.0,385.0" fill="none" stroke="#a81224" stroke-width="2.5"/>
</g>
</svg>
<div id="status"></div>
<div class="pane" style="left:2176px;width:50px"></div>
<div class="pane" style="left:2232px;width:140px"></div>
<div class="pane" style="left:2378px;width:140px"></div>
<div class="pane" style="left:2524px;width:140px"></div>
<div class="pane" style="left:2670px;width:52px"></div>
<div class="pane" style="left:2728px;width:60px"></div>
<div class="pane" style="left:2794px;width:48px"></div>
<div id="status" style="background:none">
<span style="left:7px">Press F1 for help</span>
<span style="left:2185px">cm</span>
<span style="left:2240px">X: -112.2</span>
<span style="left:2387px">Y: 132.2</span>
<span style="left:2533px">Z: 0.0</span>
</div>
<svg class="ic" style="left:0;top:1760px" width="2880" height="40" viewBox="0 1760 2880 40">
<path d="M0,1800 L0,1794 Q0.500,1799.500 6,1800Z" fill="#000"/>
<path d="M2880,1800 L2880,1794 Q2879.500,1799.500 2874,1800Z" fill="#000"/>
<path d="M2858,1799 L2879,1778 M2864,1799 L2879,1784 M2870,1799 L2879,1790" stroke="#8a8a8a" stroke-width="2"/>
</svg>
</body></html>
